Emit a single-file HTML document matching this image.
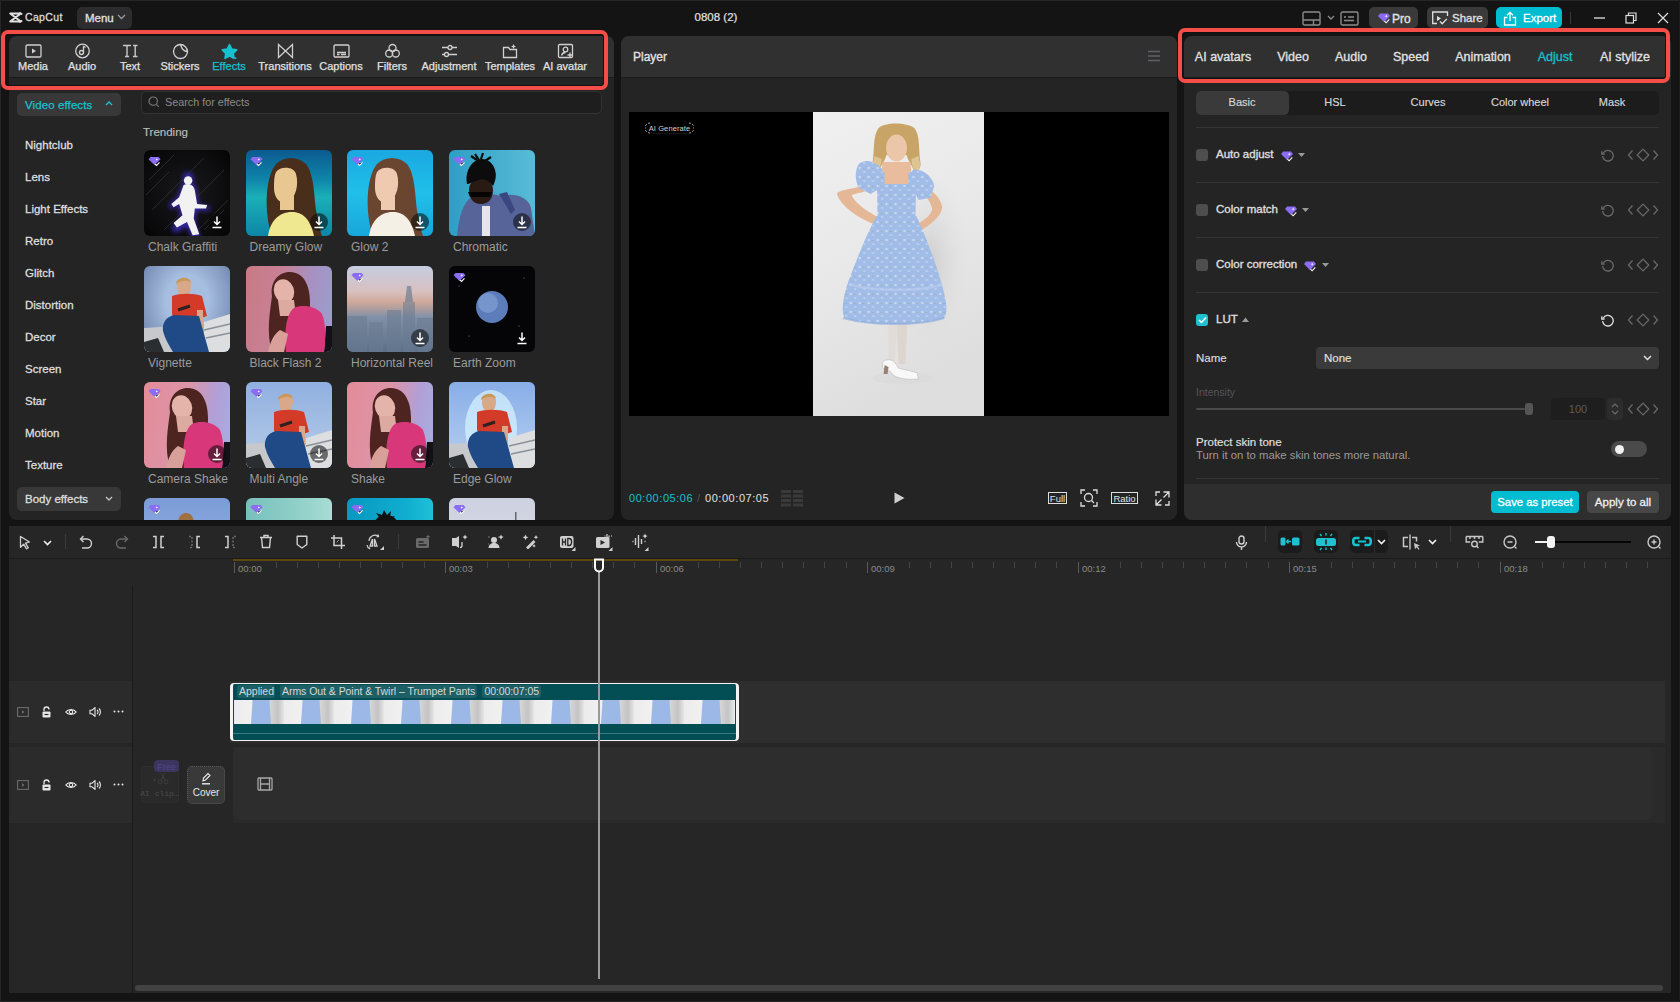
<!DOCTYPE html>
<html><head><meta charset="utf-8"><style>
html,body{margin:0;padding:0;}
body{width:1680px;height:1002px;overflow:hidden;background:#141414;font-family:"Liberation Sans", sans-serif;position:relative;}
.a{position:absolute;}
.t{white-space:nowrap;}
</style></head><body>
<div class="a" style="left:0px;top:0px;width:1680px;height:1px;background:#262626;border-radius:0px;"></div><div class="a" style="left:0px;top:0px;width:1px;height:1002px;background:#262626;border-radius:0px;"></div><div class="a" style="left:0px;top:1001px;width:1680px;height:1px;background:#262626;border-radius:0px;"></div><div class="a" style="left:1679px;top:0px;width:1px;height:1002px;background:#1c1c1c;border-radius:0px;"></div><svg class="a" style="left:9px;top:11.5px;" width="14" height="11" viewBox="0 0 14 11" fill="none"><path d="M1.2 1.5h10M1.2 9.5h10M1.5 1.8l10 7.5M11.5 1.8l-10 7.5M11 1l1.5 1M11 10l1.5-1" stroke="#e0e0e0" stroke-width="2" stroke-linecap="round"/></svg><div class="a t" style="font-size:10.5px;line-height:10.5px;color:#dcdcdc;font-weight:400;top:12.21px;letter-spacing:0.35px;-webkit-text-stroke:0.3px #dcdcdc;left:25px;">CapCut</div><div class="a" style="left:77px;top:7px;width:55px;height:22px;background:#2c2c2f;border-radius:5px;"></div><div class="a t" style="font-size:11.5px;line-height:11.5px;color:#e2e2e2;font-weight:400;top:12.57px;-webkit-text-stroke:0.3px #e2e2e2;left:85px;">Menu</div><svg class="a" style="left:117px;top:14px;" width="9" height="6" viewBox="0 0 9 6" fill="none"><path d="M1 1l3.5 3.5L8 1" stroke="#9a9a9a" stroke-width="1.3"/></svg><div class="a t" style="font-size:11.5px;line-height:11.5px;color:#e2e2e2;font-weight:400;top:12.07px;-webkit-text-stroke:0.2px #e2e2e2;left:516px;width:400px;text-align:center;">0808 (2)</div><svg class="a" style="left:1302px;top:11px;" width="19" height="15" viewBox="0 0 19 15" fill="none"><rect x="1" y="1" width="17" height="13" rx="1.5" stroke="#8a8a8a" stroke-width="1.4"/><path d="M1 9h17M11.5 9v5" stroke="#8a8a8a" stroke-width="1.4"/></svg><svg class="a" style="left:1327px;top:15px;" width="8" height="5" viewBox="0 0 8 5" fill="none"><path d="M1 1l3 3 3-3" stroke="#8a8a8a" stroke-width="1.3"/></svg><svg class="a" style="left:1340px;top:11px;" width="19" height="15" viewBox="0 0 19 15" fill="none"><rect x="1" y="1" width="17" height="13" rx="1.5" stroke="#8a8a8a" stroke-width="1.4"/><path d="M4 6h2M8 6h6M4 9.5h10" stroke="#8a8a8a" stroke-width="1.4"/></svg><div class="a" style="left:1369px;top:7px;width:49px;height:21px;background:#3a3a3a;border-radius:5px;"></div><svg class="a" style="left:1378px;top:12px;" width="13" height="12" viewBox="0 0 13 12" fill="none"><path d="M2 1.5h8l2 2.5-6 6-6-6z" fill="#8b6cf5"/><path d="M6.5 9.2l1.6 1.6 3.2-3.4" stroke="#fff" stroke-width="1.1"/><path d="M8.2 2.8l.5 1 1 .4-1 .4-.5 1-.5-1-1-.4 1-.4z" fill="#fff"/></svg><div class="a t" style="font-size:12px;line-height:12px;color:#e2e2e2;font-weight:400;top:12.64px;-webkit-text-stroke:0.35px #e2e2e2;left:1392px;">Pro</div><div class="a" style="left:1427px;top:7px;width:61px;height:21px;background:#3a3a3a;border-radius:5px;"></div><svg class="a" style="left:1431px;top:11px;" width="18" height="15" viewBox="0 0 18 15" fill="none"><path d="M13 1H1.7v11.5H6M16.5 5v-4H13" stroke="#e0e0e0" stroke-width="1.3"/><path d="M6 5l4 2.5L6 10z" fill="#e0e0e0"/><path d="M9 10.5l2.2 2.2 4.6-4.8" stroke="#e0e0e0" stroke-width="1.3"/></svg><div class="a t" style="font-size:11.5px;line-height:11.5px;color:#e2e2e2;font-weight:400;top:12.57px;-webkit-text-stroke:0.3px #e2e2e2;left:1452px;">Share</div><div class="a" style="left:1496px;top:7px;width:66px;height:21px;background:#00bcd0;border-radius:5px;"></div><svg class="a" style="left:1503px;top:11px;" width="14" height="15" viewBox="0 0 14 15" fill="none"><path d="M4.5 6.5H1.5v7.5h11V6.5h-3" stroke="#fff" stroke-width="1.3"/><path d="M7 10V1.5M4 4.3L7 1.3l3 3" stroke="#fff" stroke-width="1.3"/></svg><div class="a t" style="font-size:11.5px;line-height:11.5px;color:#ffffff;font-weight:400;top:12.57px;-webkit-text-stroke:0.3px #ffffff;left:1523px;">Export</div><div class="a" style="left:1570px;top:12px;width:1px;height:12px;background:#3a3a3a;border-radius:0px;"></div><div class="a" style="left:1594px;top:17px;width:11px;height:1.6px;background:#9a9a9a;border-radius:0px;"></div><svg class="a" style="left:1625px;top:12px;" width="12" height="12" viewBox="0 0 12 12" fill="none"><rect x="1" y="3.5" width="7.5" height="7.5" stroke="#e0e0e0" stroke-width="1.2"/><path d="M3.5 3.5V1h7.5v7.5H8.5" stroke="#e0e0e0" stroke-width="1.2"/></svg><svg class="a" style="left:1657px;top:12px;" width="12" height="12" viewBox="0 0 12 12" fill="none"><path d="M1 1l10 10M11 1L1 11" stroke="#e0e0e0" stroke-width="1.2"/></svg><div class="a" style="left:9px;top:36px;width:605px;height:484px;background:#242424;border-radius:8px;overflow:hidden;"></div><div class="a" style="left:9px;top:36px;width:605px;height:41px;background:#303030;border-radius:0px;border-radius:8px 8px 0 0;"></div><div class="a" style="left:9px;top:77px;width:605px;height:1px;background:#1b1b1b;border-radius:0px;"></div><div class="a" style="left:621px;top:36px;width:556px;height:484px;background:#242424;border-radius:8px;overflow:hidden;"></div><div class="a" style="left:621px;top:36px;width:556px;height:41px;background:#303030;border-radius:0px;border-radius:8px 8px 0 0;"></div><div class="a" style="left:621px;top:77px;width:556px;height:1px;background:#1b1b1b;border-radius:0px;"></div><div class="a" style="left:1184px;top:36px;width:487px;height:484px;background:#242424;border-radius:8px;overflow:hidden;"></div><div class="a" style="left:1184px;top:36px;width:487px;height:41px;background:#303030;border-radius:0px;border-radius:8px 8px 0 0;"></div><div class="a" style="left:1184px;top:77px;width:487px;height:1px;background:#1b1b1b;border-radius:0px;"></div><svg class="a" style="left:24.5px;top:43px;" width="17" height="17" viewBox="0 0 17 17" fill="none"><rect x="1" y="2" width="15" height="12" rx="1.2" stroke="#d0d0d0" stroke-width="1.3"/><path d="M7 5.5l4 2.5-4 2.5z" fill="#d0d0d0"/></svg><div class="a t" style="font-size:11px;line-height:11px;color:#e0e0e0;font-weight:400;top:61.49px;-webkit-text-stroke:0.25px #e0e0e0;left:-167px;width:400px;text-align:center;">Media</div><svg class="a" style="left:73.5px;top:43px;" width="17" height="17" viewBox="0 0 17 17" fill="none"><circle cx="8.5" cy="8" r="6.8" stroke="#d0d0d0" stroke-width="1.3"/><circle cx="7.5" cy="9.5" r="2" stroke="#d0d0d0" stroke-width="1.3"/><path d="M9.5 9.5V3.5l2 .8" stroke="#d0d0d0" stroke-width="1.3"/></svg><div class="a t" style="font-size:11px;line-height:11px;color:#e0e0e0;font-weight:400;top:61.49px;-webkit-text-stroke:0.25px #e0e0e0;left:-118px;width:400px;text-align:center;">Audio</div><svg class="a" style="left:121.5px;top:43px;" width="17" height="17" viewBox="0 0 17 17" fill="none"><path d="M1 2.5h8M5 2.5v11M3 13.5h4M11 2.5h4.5M13.2 2.5v11M11 13.5h4.5" stroke="#c8c8c8" stroke-width="1.4"/></svg><div class="a t" style="font-size:11px;line-height:11px;color:#e0e0e0;font-weight:400;top:61.49px;-webkit-text-stroke:0.25px #e0e0e0;left:-70px;width:400px;text-align:center;">Text</div><svg class="a" style="left:171.5px;top:43px;" width="17" height="17" viewBox="0 0 17 17" fill="none"><path d="M15.5 8.5A7 7 0 1 1 8.5 1.5" stroke="#d0d0d0" stroke-width="1.3"/><path d="M8.5 1.5c3.5 0 7 3.5 7 7-3 0-5.5-1-7-7z" stroke="#d0d0d0" stroke-width="1.3"/></svg><div class="a t" style="font-size:11px;line-height:11px;color:#e0e0e0;font-weight:400;top:61.49px;-webkit-text-stroke:0.25px #e0e0e0;left:-20px;width:400px;text-align:center;">Stickers</div><svg class="a" style="left:220.5px;top:43px;" width="17" height="17" viewBox="0 0 17 17" fill="none"><path d="M8.50 1.60 L10.79 6.04 L15.73 6.85 L12.21 10.41 L12.97 15.35 L8.50 13.10 L4.03 15.35 L4.79 10.41 L1.27 6.85 L6.21 6.04z" fill="#14c2d0" stroke="#14c2d0" stroke-width="1.6" stroke-linejoin="round"/><path d="M13.5 14.2l1.8 1.6" stroke="#14c2d0" stroke-width="1.2"/></svg><div class="a t" style="font-size:11px;line-height:11px;color:#14c2d0;font-weight:400;top:61.49px;-webkit-text-stroke:0.25px #14c2d0;left:29px;width:400px;text-align:center;">Effects</div><svg class="a" style="left:276.5px;top:43px;" width="17" height="17" viewBox="0 0 17 17" fill="none"><path d="M1.5 1.5v13L8.5 8zM15.5 1.5v13L8.5 8z" stroke="#d0d0d0" stroke-width="1.3"/></svg><div class="a t" style="font-size:11px;line-height:11px;color:#e0e0e0;font-weight:400;top:61.49px;-webkit-text-stroke:0.25px #e0e0e0;left:85px;width:400px;text-align:center;">Transitions</div><svg class="a" style="left:332.5px;top:43px;" width="17" height="17" viewBox="0 0 17 17" fill="none"><rect x="1" y="2" width="15" height="12" rx="1.2" stroke="#d0d0d0" stroke-width="1.3"/><path d="M4 9.5h9M4 11.5h2.5M8 11.5h5" stroke="#d0d0d0" stroke-width="1.3"/></svg><div class="a t" style="font-size:11px;line-height:11px;color:#e0e0e0;font-weight:400;top:61.49px;-webkit-text-stroke:0.25px #e0e0e0;left:141px;width:400px;text-align:center;">Captions</div><svg class="a" style="left:383.5px;top:43px;" width="17" height="17" viewBox="0 0 17 17" fill="none"><circle cx="8.5" cy="5" r="3.5" stroke="#d0d0d0" stroke-width="1.3"/><circle cx="5.2" cy="10.5" r="3.5" stroke="#d0d0d0" stroke-width="1.3"/><circle cx="11.8" cy="10.5" r="3.5" stroke="#d0d0d0" stroke-width="1.3"/></svg><div class="a t" style="font-size:11px;line-height:11px;color:#e0e0e0;font-weight:400;top:61.49px;-webkit-text-stroke:0.25px #e0e0e0;left:192px;width:400px;text-align:center;">Filters</div><svg class="a" style="left:440.5px;top:43px;" width="17" height="17" viewBox="0 0 17 17" fill="none"><path d="M1 4.5h6M11 4.5h5M1 11.5h2.5M7.5 11.5h8.5" stroke="#d0d0d0" stroke-width="1.3"/><circle cx="9" cy="4.5" r="2" stroke="#d0d0d0" stroke-width="1.3"/><circle cx="5.5" cy="11.5" r="2" stroke="#d0d0d0" stroke-width="1.3"/></svg><div class="a t" style="font-size:11px;line-height:11px;color:#e0e0e0;font-weight:400;top:61.49px;-webkit-text-stroke:0.25px #e0e0e0;left:249px;width:400px;text-align:center;">Adjustment</div><svg class="a" style="left:501.5px;top:43px;" width="17" height="17" viewBox="0 0 17 17" fill="none"><path d="M1.5 4.5h5l1.5 2h6.5v8h-13z" stroke="#d0d0d0" stroke-width="1.3"/><path d="M11.5 1l.8 1.7 1.7.8-1.7.8-.8 1.7-.8-1.7-1.7-.8 1.7-.8z" fill="#d0d0d0"/></svg><div class="a t" style="font-size:11px;line-height:11px;color:#e0e0e0;font-weight:400;top:61.49px;-webkit-text-stroke:0.25px #e0e0e0;left:310px;width:400px;text-align:center;">Templates</div><svg class="a" style="left:556.5px;top:43px;" width="17" height="17" viewBox="0 0 17 17" fill="none"><rect x="1.5" y="1.5" width="14" height="13" rx="1.2" stroke="#d0d0d0" stroke-width="1.3"/><circle cx="8.5" cy="6.5" r="2.3" stroke="#d0d0d0" stroke-width="1.3"/><path d="M4.5 12.5c.5-2 2-3 4-3" stroke="#d0d0d0" stroke-width="1.3"/><path d="M13 9.5v5M10.5 12h5" stroke="#d0d0d0" stroke-width="1.3"/></svg><div class="a t" style="font-size:11px;line-height:11px;color:#e0e0e0;font-weight:400;top:61.49px;-webkit-text-stroke:0.25px #e0e0e0;left:365px;width:400px;text-align:center;">AI avatar</div><div class="a" style="left:17px;top:93px;width:104px;height:23px;background:#383838;border-radius:5px;"></div><div class="a t" style="font-size:11.5px;line-height:11.5px;color:#14c2d0;font-weight:400;top:99.57px;letter-spacing:0.1px;-webkit-text-stroke:0.25px #14c2d0;left:25px;">Video effects</div><svg class="a" style="left:105px;top:101px;" width="8" height="5" viewBox="0 0 8 5" fill="none"><path d="M1 4l3-3 3 3" stroke="#1fc0cf" stroke-width="1.4"/></svg><div class="a t" style="font-size:11.5px;line-height:11.5px;color:#dedede;font-weight:400;top:139.77px;-webkit-text-stroke:0.3px #dedede;left:25px;">Nightclub</div><div class="a t" style="font-size:11.5px;line-height:11.5px;color:#dedede;font-weight:400;top:171.77px;-webkit-text-stroke:0.3px #dedede;left:25px;">Lens</div><div class="a t" style="font-size:11.5px;line-height:11.5px;color:#dedede;font-weight:400;top:203.77px;-webkit-text-stroke:0.3px #dedede;left:25px;">Light Effects</div><div class="a t" style="font-size:11.5px;line-height:11.5px;color:#dedede;font-weight:400;top:235.77px;-webkit-text-stroke:0.3px #dedede;left:25px;">Retro</div><div class="a t" style="font-size:11.5px;line-height:11.5px;color:#dedede;font-weight:400;top:267.77px;-webkit-text-stroke:0.3px #dedede;left:25px;">Glitch</div><div class="a t" style="font-size:11.5px;line-height:11.5px;color:#dedede;font-weight:400;top:299.77px;-webkit-text-stroke:0.3px #dedede;left:25px;">Distortion</div><div class="a t" style="font-size:11.5px;line-height:11.5px;color:#dedede;font-weight:400;top:331.77px;-webkit-text-stroke:0.3px #dedede;left:25px;">Decor</div><div class="a t" style="font-size:11.5px;line-height:11.5px;color:#dedede;font-weight:400;top:363.77px;-webkit-text-stroke:0.3px #dedede;left:25px;">Screen</div><div class="a t" style="font-size:11.5px;line-height:11.5px;color:#dedede;font-weight:400;top:395.77px;-webkit-text-stroke:0.3px #dedede;left:25px;">Star</div><div class="a t" style="font-size:11.5px;line-height:11.5px;color:#dedede;font-weight:400;top:427.77px;-webkit-text-stroke:0.3px #dedede;left:25px;">Motion</div><div class="a t" style="font-size:11.5px;line-height:11.5px;color:#dedede;font-weight:400;top:459.77px;-webkit-text-stroke:0.3px #dedede;left:25px;">Texture</div><div class="a" style="left:17px;top:487px;width:104px;height:24px;background:#383838;border-radius:5px;"></div><div class="a t" style="font-size:11.5px;line-height:11.5px;color:#dedede;font-weight:400;top:493.57px;-webkit-text-stroke:0.3px #dedede;left:25px;">Body effects</div><svg class="a" style="left:105px;top:496px;" width="8" height="5" viewBox="0 0 8 5" fill="none"><path d="M1 1l3 3 3-3" stroke="#c0c0c0" stroke-width="1.4"/></svg><div class="a" style="left:141px;top:91px;width:461px;height:23px;background:#1e1e1e;border-radius:5px;box-sizing:border-box;border:1px solid #333;"></div><svg class="a" style="left:148px;top:96px;" width="12" height="12" viewBox="0 0 12 12" fill="none"><circle cx="5.2" cy="5.2" r="4.2" stroke="#777" stroke-width="1.2"/><path d="M8.3 8.3l2.5 2.5" stroke="#777" stroke-width="1.2"/></svg><div class="a t" style="font-size:10.8px;line-height:10.8px;color:#8a8a8a;font-weight:400;top:97.26px;left:165px;">Search for effects</div><div class="a t" style="font-size:11.5px;line-height:11.5px;color:#bdbdbd;font-weight:400;top:127.07px;-webkit-text-stroke:0.15px #bdbdbd;left:143px;">Trending</div><div class="a" style="left:9px;top:36px;width:605px;height:484px;overflow:hidden;border-radius:8px;pointer-events:none;"><div class="a" style="left:135px;top:114px;width:86px;height:86px;border-radius:6px;overflow:hidden;background:radial-gradient(ellipse at 50% 50%,#1a1a1e,#050505);"><svg width="86" height="86" viewBox="0 0 86 86"><defs><filter id="bl" x="-50%" y="-50%" width="200%" height="200%"><feGaussianBlur stdDeviation="2.2"/></filter></defs><g stroke="#3a3a3a" stroke-width="0.8" opacity="0.8"><path d="M5 30L30 5M8 60L60 8M20 80L80 20M50 84L84 50M2 45L25 22M60 80L80 60"/></g><g transform="translate(43 54) scale(1.12) translate(-46 -58)"><g filter="url(#bl)" fill="#3a2ab8" opacity="0.95" transform="translate(46 52) scale(1.18) translate(-46 -52)"><circle cx="47" cy="37" r="4"/><path d="M43 41c5-2 9 0 10 5l2 12 9 1-1 3-10 0-1 9 5 14-6 1-5-12-9 5-3-4 8-7-3-10-5 3-2-3 7-6z"/></g><circle cx="47" cy="37" r="3.8" fill="#f2f2f2"/><path d="M43 41c5-2 9 0 10 5l2 12 9 1-1 3-10 0-1 9 5 14-6 1-5-12-9 5-3-4 8-7-3-10-5 3-2-3 7-6z" fill="#f2f2f2"/></g><g transform="translate(5,6)"><path d="M1.5 1h8l2 2.3-6 5.7-6-5.7z" fill="#8b6cf5"/><path d="M6 8l1.5 1.5 3-3.2" stroke="#fff" stroke-width="1.1"/><path d="M7.8 2.2l.45.9.9.35-.9.35-.45.9-.45-.9-.9-.35.9-.35z" fill="#fff"/></g><circle cx="73" cy="72" r="9" fill="rgba(10,10,10,0.55)"/><path d="M73 66.5v8M70 71.5l3 3 3-3M68.5 77.5h9" stroke="#fff" stroke-width="1.5"/></svg></div><div class="a t" style="left:139px;top:205.04px;font-size:12px;line-height:12px;color:#9c9c9c;">Chalk Graffiti</div><div class="a" style="left:236.5px;top:114px;width:86px;height:86px;border-radius:6px;overflow:hidden;background:linear-gradient(180deg,#0b5a90 0%,#0f86aa 35%,#1ab0b8 55%,#0d86a6 100%);"><svg width="86" height="86" viewBox="0 0 86 86"><path d="M24 80C18 56 20 26 30 14c8-8 22-8 30 0 8 10 8 30 10 46 2 12 4 20 6 26H40z" fill="#4a2e1c"/><path d="M30 22c4-6 18-6 20 2 3 10 0 24-8 28-8 3-14-4-14-14 0-6 0-12 2-16z" fill="#e8c890"/><path d="M34 46h14v14H34z" fill="#e8c890"/><path d="M22 86c2-14 10-24 24-24 10 0 18 6 22 24z" fill="#f0e890"/><g transform="translate(5,6)"><path d="M1.5 1h8l2 2.3-6 5.7-6-5.7z" fill="#8b6cf5"/><path d="M6 8l1.5 1.5 3-3.2" stroke="#fff" stroke-width="1.1"/><path d="M7.8 2.2l.45.9.9.35-.9.35-.45.9-.45-.9-.9-.35.9-.35z" fill="#fff"/></g><circle cx="73" cy="72" r="9" fill="rgba(10,10,10,0.55)"/><path d="M73 66.5v8M70 71.5l3 3 3-3M68.5 77.5h9" stroke="#fff" stroke-width="1.5"/></svg></div><div class="a t" style="left:240.5px;top:205.04px;font-size:12px;line-height:12px;color:#9c9c9c;">Dreamy Glow</div><div class="a" style="left:338px;top:114px;width:86px;height:86px;border-radius:6px;overflow:hidden;background:linear-gradient(180deg,#1aa8e0 0%,#20c0ea 50%,#18a6da 100%);"><svg width="86" height="86" viewBox="0 0 86 86"><path d="M24 80C18 56 20 26 30 14c8-8 22-8 30 0 8 10 8 30 10 46 2 12 4 20 6 26H40z" fill="#6a4630"/><path d="M30 22c4-6 18-6 20 2 3 10 0 24-8 28-8 3-14-4-14-14 0-6 0-12 2-16z" fill="#f0cab0"/><path d="M34 46h14v14H34z" fill="#f0cab0"/><path d="M22 86c2-14 10-24 24-24 10 0 18 6 22 24z" fill="#f4f0e6"/><g transform="translate(5,6)"><path d="M1.5 1h8l2 2.3-6 5.7-6-5.7z" fill="#8b6cf5"/><path d="M6 8l1.5 1.5 3-3.2" stroke="#fff" stroke-width="1.1"/><path d="M7.8 2.2l.45.9.9.35-.9.35-.45.9-.45-.9-.9-.35.9-.35z" fill="#fff"/></g><circle cx="73" cy="72" r="9" fill="rgba(10,10,10,0.55)"/><path d="M73 66.5v8M70 71.5l3 3 3-3M68.5 77.5h9" stroke="#fff" stroke-width="1.5"/></svg></div><div class="a t" style="left:342px;top:205.04px;font-size:12px;line-height:12px;color:#9c9c9c;">Glow 2</div><div class="a" style="left:440px;top:114px;width:86px;height:86px;border-radius:6px;overflow:hidden;background:linear-gradient(90deg,#2e9ec4,#48b0d0 60%,#58bcd8);"><svg width="86" height="86" viewBox="0 0 86 86"><path d="M8 86c2-20 6-34 16-40 10-4 20-2 30 0 12-4 26 2 28 12l4 28z" fill="#56649a"/><path d="M50 44l12 20 4-4-8-18z" fill="#3a4680"/><path d="M33 56h8v30h-8z" fill="#e6e6ea"/><path d="M20 40c0-8 6-12 12-12s12 4 12 12c0 8-4 14-12 14s-12-6-12-14z" fill="#2a1a14"/><path d="M19 42h24l-2 5H21z" fill="#050505"/><path d="M18 34c-2-10 2-20 10-24 8-3 16 2 18 10 2 6 0 12-2 16-4-6-10-8-14-6-6 2-10 4-12 4z" fill="#0c0c0c"/><path d="M28 10l-6-4M32 9l2-6M36 11l6-4M30 10l-4-6" stroke="#0c0c0c" stroke-width="2.2"/><g transform="translate(5,6)"><path d="M1.5 1h8l2 2.3-6 5.7-6-5.7z" fill="#8b6cf5"/><path d="M6 8l1.5 1.5 3-3.2" stroke="#fff" stroke-width="1.1"/><path d="M7.8 2.2l.45.9.9.35-.9.35-.45.9-.45-.9-.9-.35.9-.35z" fill="#fff"/></g><circle cx="73" cy="72" r="9" fill="rgba(10,10,10,0.55)"/><path d="M73 66.5v8M70 71.5l3 3 3-3M68.5 77.5h9" stroke="#fff" stroke-width="1.5"/></svg></div><div class="a t" style="left:444px;top:205.04px;font-size:12px;line-height:12px;color:#9c9c9c;">Chromatic</div><div class="a" style="left:135px;top:230px;width:86px;height:86px;border-radius:6px;overflow:hidden;background:radial-gradient(ellipse at 50% 40%,#a6bee0 35%,#6478a0 100%);"><svg width="86" height="86" viewBox="0 0 86 86"><path d="M0 62l32-2v26H0z" fill="#c6c8cc"/><path d="M0 76l14-4 6 14H0z" fill="#2a2e30"/><path d="M60 56l26-8v38H60z" fill="#dcdee0"/><path d="M60 64l26-6M62 72l24-5" stroke="#8a9098" stroke-width="1.5"/><path d="M33 20c0-6 4-8 7-8s7 2 7 8c0 6-3 10-7 10s-7-4-7-10z" fill="#d8a888"/><path d="M32 18c0-7 14-9 15-1-3-3-9-3-15 1z" fill="#c89858"/><path d="M28 30c8-3 22-3 30 0l5 20-6 2-2 6H32l-4-10z" fill="#d43a28"/><path d="M34 44l12-4" stroke="#302020" stroke-width="3"/><path d="M53 44h6v20h-6z" fill="#d8a888"/><path d="M30 49c-8 2-12 8-11 16 2 8 6 14 10 21h36l-10-36z" fill="#1f4a86"/></svg></div><div class="a t" style="left:139px;top:321.04px;font-size:12px;line-height:12px;color:#9c9c9c;">Vignette</div><div class="a" style="left:236.5px;top:230px;width:86px;height:86px;border-radius:6px;overflow:hidden;background:linear-gradient(100deg,#c87a84 0%,#c88094 35%,#a890c0 65%,#98a0d0 100%);"><svg width="86" height="86" viewBox="0 0 86 86"><path d="M80 60h6v26h-8z" fill="#141018"/><path d="M26 86c-6-20-2-40 0-56-2-14 6-24 18-24 14 0 20 14 20 30 0 16-2 30 2 50z" fill="#4e2420"/><ellipse cx="38" cy="25" rx="10" ry="12" fill="#e4b4aa" transform="rotate(-20 38 25)"/><path d="M32 34h16l2 16H34z" fill="#dcaaa0"/><path d="M40 86c-2-20 0-38 8-44 8-4 22-2 28 6 4 10 4 24 2 38z" fill="#d8387a"/><path d="M22 86c2-10 6-18 12-22l8 4-4 18z" fill="#d8a098"/></svg></div><div class="a t" style="left:240.5px;top:321.04px;font-size:12px;line-height:12px;color:#9c9c9c;">Black Flash 2</div><div class="a" style="left:338px;top:230px;width:86px;height:86px;border-radius:6px;overflow:hidden;background:linear-gradient(180deg,#c6cde0 0%,#d8c0c0 30%,#d0a898 42%,#8090a8 60%,#5a7088 100%);"><svg width="86" height="86" viewBox="0 0 86 86"><path d="M60 20h4l2 16h-8z" fill="#7a8498" opacity="0.8"/><path d="M0 50h20v36H0zM22 56h14v30H22zM40 44h14v42H40zM56 36h12v50H56zM70 52h16v34H70z" fill="#6a7a90" opacity="0.55"/><g transform="translate(5,6)"><path d="M1.5 1h8l2 2.3-6 5.7-6-5.7z" fill="#8b6cf5"/><path d="M6 8l1.5 1.5 3-3.2" stroke="#fff" stroke-width="1.1"/><path d="M7.8 2.2l.45.9.9.35-.9.35-.45.9-.45-.9-.9-.35.9-.35z" fill="#fff"/></g><circle cx="73" cy="72" r="9" fill="rgba(10,10,10,0.55)"/><path d="M73 66.5v8M70 71.5l3 3 3-3M68.5 77.5h9" stroke="#fff" stroke-width="1.5"/></svg></div><div class="a t" style="left:342px;top:321.04px;font-size:12px;line-height:12px;color:#9c9c9c;">Horizontal Reel</div><div class="a" style="left:440px;top:230px;width:86px;height:86px;border-radius:6px;overflow:hidden;background:#050508;"><svg width="86" height="86" viewBox="0 0 86 86"><circle cx="43" cy="41" r="16" fill="#5c7cba"/><circle cx="39" cy="37" r="10" fill="#8eaadc" opacity="0.55"/><g fill="#fff" opacity="0.5"><circle cx="10" cy="20" r="0.6"/><circle cx="75" cy="12" r="0.6"/><circle cx="70" cy="60" r="0.6"/><circle cx="20" cy="70" r="0.6"/></g><g transform="translate(5,6)"><path d="M1.5 1h8l2 2.3-6 5.7-6-5.7z" fill="#8b6cf5"/><path d="M6 8l1.5 1.5 3-3.2" stroke="#fff" stroke-width="1.1"/><path d="M7.8 2.2l.45.9.9.35-.9.35-.45.9-.45-.9-.9-.35.9-.35z" fill="#fff"/></g><path d="M73 66.5v8M70 71.5l3 3 3-3M68.5 77.5h9" stroke="#fff" stroke-width="1.5"/></svg></div><div class="a t" style="left:444px;top:321.04px;font-size:12px;line-height:12px;color:#9c9c9c;">Earth Zoom</div><div class="a" style="left:135px;top:346px;width:86px;height:86px;border-radius:6px;overflow:hidden;background:linear-gradient(100deg,#e48c98 0%,#dc94a8 45%,#b0a0d8 75%,#a8b0e0 100%);"><svg width="86" height="86" viewBox="0 0 86 86"><path d="M80 60h6v26h-8z" fill="#141018"/><path d="M26 86c-6-20-2-40 0-56-2-14 6-24 18-24 14 0 20 14 20 30 0 16-2 30 2 50z" fill="#4e2420"/><ellipse cx="38" cy="25" rx="10" ry="12" fill="#e4b4aa" transform="rotate(-20 38 25)"/><path d="M32 34h16l2 16H34z" fill="#dcaaa0"/><path d="M40 86c-2-20 0-38 8-44 8-4 22-2 28 6 4 10 4 24 2 38z" fill="#d8387a"/><path d="M22 86c2-10 6-18 12-22l8 4-4 18z" fill="#d8a098"/><g transform="translate(5,6)"><path d="M1.5 1h8l2 2.3-6 5.7-6-5.7z" fill="#8b6cf5"/><path d="M6 8l1.5 1.5 3-3.2" stroke="#fff" stroke-width="1.1"/><path d="M7.8 2.2l.45.9.9.35-.9.35-.45.9-.45-.9-.9-.35.9-.35z" fill="#fff"/></g><circle cx="73" cy="72" r="9" fill="rgba(10,10,10,0.55)"/><path d="M73 66.5v8M70 71.5l3 3 3-3M68.5 77.5h9" stroke="#fff" stroke-width="1.5"/></svg></div><div class="a t" style="left:139px;top:437.04px;font-size:12px;line-height:12px;color:#9c9c9c;">Camera Shake</div><div class="a" style="left:236.5px;top:346px;width:86px;height:86px;border-radius:6px;overflow:hidden;background:linear-gradient(180deg,#90b0e0,#b8cce8);"><svg width="86" height="86" viewBox="0 0 86 86"><path d="M0 62l32-2v26H0z" fill="#c6c8cc"/><path d="M0 76l14-4 6 14H0z" fill="#2a2e30"/><path d="M60 56l26-8v38H60z" fill="#dcdee0"/><path d="M60 64l26-6M62 72l24-5" stroke="#8a9098" stroke-width="1.5"/><path d="M33 20c0-6 4-8 7-8s7 2 7 8c0 6-3 10-7 10s-7-4-7-10z" fill="#d8a888"/><path d="M32 18c0-7 14-9 15-1-3-3-9-3-15 1z" fill="#c89858"/><path d="M28 30c8-3 22-3 30 0l5 20-6 2-2 6H32l-4-10z" fill="#d43a28"/><path d="M34 44l12-4" stroke="#302020" stroke-width="3"/><path d="M53 44h6v20h-6z" fill="#d8a888"/><path d="M30 49c-8 2-12 8-11 16 2 8 6 14 10 21h36l-10-36z" fill="#1f4a86"/><g transform="translate(5,6)"><path d="M1.5 1h8l2 2.3-6 5.7-6-5.7z" fill="#8b6cf5"/><path d="M6 8l1.5 1.5 3-3.2" stroke="#fff" stroke-width="1.1"/><path d="M7.8 2.2l.45.9.9.35-.9.35-.45.9-.45-.9-.9-.35.9-.35z" fill="#fff"/></g><circle cx="73" cy="72" r="9" fill="rgba(10,10,10,0.55)"/><path d="M73 66.5v8M70 71.5l3 3 3-3M68.5 77.5h9" stroke="#fff" stroke-width="1.5"/></svg></div><div class="a t" style="left:240.5px;top:437.04px;font-size:12px;line-height:12px;color:#9c9c9c;">Multi Angle</div><div class="a" style="left:338px;top:346px;width:86px;height:86px;border-radius:6px;overflow:hidden;background:linear-gradient(100deg,#e48c98 0%,#dc94a8 45%,#b0a0d8 75%,#a8b0e0 100%);"><svg width="86" height="86" viewBox="0 0 86 86"><path d="M80 60h6v26h-8z" fill="#141018"/><path d="M26 86c-6-20-2-40 0-56-2-14 6-24 18-24 14 0 20 14 20 30 0 16-2 30 2 50z" fill="#4e2420"/><ellipse cx="38" cy="25" rx="10" ry="12" fill="#e4b4aa" transform="rotate(-20 38 25)"/><path d="M32 34h16l2 16H34z" fill="#dcaaa0"/><path d="M40 86c-2-20 0-38 8-44 8-4 22-2 28 6 4 10 4 24 2 38z" fill="#d8387a"/><path d="M22 86c2-10 6-18 12-22l8 4-4 18z" fill="#d8a098"/><circle cx="73" cy="72" r="9" fill="rgba(10,10,10,0.55)"/><path d="M73 66.5v8M70 71.5l3 3 3-3M68.5 77.5h9" stroke="#fff" stroke-width="1.5"/></svg></div><div class="a t" style="left:342px;top:437.04px;font-size:12px;line-height:12px;color:#9c9c9c;">Shake</div><div class="a" style="left:440px;top:346px;width:86px;height:86px;border-radius:6px;overflow:hidden;background:linear-gradient(180deg,#88aee8,#b8d0f0);"><svg width="86" height="86" viewBox="0 0 86 86"><ellipse cx="42" cy="46" rx="26" ry="38" fill="rgba(215,245,255,0.7)"/><path d="M0 62l32-2v26H0z" fill="#c6c8cc"/><path d="M0 76l14-4 6 14H0z" fill="#2a2e30"/><path d="M60 56l26-8v38H60z" fill="#dcdee0"/><path d="M60 64l26-6M62 72l24-5" stroke="#8a9098" stroke-width="1.5"/><path d="M33 20c0-6 4-8 7-8s7 2 7 8c0 6-3 10-7 10s-7-4-7-10z" fill="#d8a888"/><path d="M32 18c0-7 14-9 15-1-3-3-9-3-15 1z" fill="#c89858"/><path d="M28 30c8-3 22-3 30 0l5 20-6 2-2 6H32l-4-10z" fill="#d43a28"/><path d="M34 44l12-4" stroke="#302020" stroke-width="3"/><path d="M53 44h6v20h-6z" fill="#d8a888"/><path d="M30 49c-8 2-12 8-11 16 2 8 6 14 10 21h36l-10-36z" fill="#1f4a86"/></svg></div><div class="a t" style="left:444px;top:437.04px;font-size:12px;line-height:12px;color:#9c9c9c;">Edge Glow</div><div class="a" style="left:135px;top:462px;width:86px;height:86px;border-radius:6px;overflow:hidden;background:linear-gradient(180deg,#7c9cd8,#9cb8e6);"><svg width="86" height="86" viewBox="0 0 86 86"><path d="M34 26c0-8 4-11 8-11s8 3 8 11z" fill="#a07040"/><g transform="translate(5,6)"><path d="M1.5 1h8l2 2.3-6 5.7-6-5.7z" fill="#8b6cf5"/><path d="M6 8l1.5 1.5 3-3.2" stroke="#fff" stroke-width="1.1"/><path d="M7.8 2.2l.45.9.9.35-.9.35-.45.9-.45-.9-.9-.35.9-.35z" fill="#fff"/></g></svg></div><div class="a" style="left:236.5px;top:462px;width:86px;height:86px;border-radius:6px;overflow:hidden;background:linear-gradient(90deg,#78c0bc,#90d0c8 60%,#a8dcd4);"><svg width="86" height="86" viewBox="0 0 86 86"><g transform="translate(5,6)"><path d="M1.5 1h8l2 2.3-6 5.7-6-5.7z" fill="#8b6cf5"/><path d="M6 8l1.5 1.5 3-3.2" stroke="#fff" stroke-width="1.1"/><path d="M7.8 2.2l.45.9.9.35-.9.35-.45.9-.45-.9-.9-.35.9-.35z" fill="#fff"/></g></svg></div><div class="a" style="left:338px;top:462px;width:86px;height:86px;border-radius:6px;overflow:hidden;background:linear-gradient(90deg,#0898c0,#10aed0 70%,#20c0d8);"><svg width="86" height="86" viewBox="0 0 86 86"><path d="M26 30c0-8 6-13 13-13s13 5 13 13zM32 19l-3-4 6 2 2-5 3 5 4-4-1 6 5-1-4 4z" fill="#111"/><g transform="translate(5,6)"><path d="M1.5 1h8l2 2.3-6 5.7-6-5.7z" fill="#8b6cf5"/><path d="M6 8l1.5 1.5 3-3.2" stroke="#fff" stroke-width="1.1"/><path d="M7.8 2.2l.45.9.9.35-.9.35-.45.9-.45-.9-.9-.35.9-.35z" fill="#fff"/></g></svg></div><div class="a" style="left:440px;top:462px;width:86px;height:86px;border-radius:6px;overflow:hidden;background:linear-gradient(180deg,#cdd2e2,#dcd8dc);"><svg width="86" height="86" viewBox="0 0 86 86"><path d="M66 14h1.5v16H66z" fill="#666"/><g transform="translate(5,6)"><path d="M1.5 1h8l2 2.3-6 5.7-6-5.7z" fill="#8b6cf5"/><path d="M6 8l1.5 1.5 3-3.2" stroke="#fff" stroke-width="1.1"/><path d="M7.8 2.2l.45.9.9.35-.9.35-.45.9-.45-.9-.9-.35.9-.35z" fill="#fff"/></g></svg></div></div><div class="a t" style="font-size:12px;line-height:12px;color:#e4e4e4;font-weight:400;top:51.14px;-webkit-text-stroke:0.3px #e4e4e4;left:633px;">Player</div><svg class="a" style="left:1147px;top:50px;" width="14" height="12" viewBox="0 0 14 12" fill="none"><path d="M1 1.5h12M1 6h12M1 10.5h12" stroke="#5f5f66" stroke-width="1.3"/></svg><div class="a" style="left:629px;top:112px;width:540px;height:304px;background:#000;border-radius:0px;"></div><svg class="a" style="left:645px;top:122px;" width="49" height="12" viewBox="0 0 49 12" fill="none"><path d="M5 1A5 5 0 0 0 5 11M44 1A5 5 0 0 1 44 11" stroke="#bbb" stroke-width="0.9" stroke-dasharray="2 1.3"/><path d="M5 11.3h39" stroke="#222" stroke-width="0.8"/></svg><div class="a t" style="font-size:7.5px;line-height:7.5px;color:#d0d0d0;font-weight:400;top:124.95px;letter-spacing:0.1px;left:469.5px;width:400px;text-align:center;">AI Generate</div><svg class="a" style="left:813px;top:112px" width="171" height="304" viewBox="0 0 172 304" preserveAspectRatio="none">
<defs>
<linearGradient id="pbg" x1="0" y1="0" x2="0.3" y2="1"><stop offset="0" stop-color="#f0f0f0"/><stop offset="0.5" stop-color="#e9e9e9"/><stop offset="1" stop-color="#dedede"/></linearGradient>
<radialGradient id="shd" cx="0.5" cy="0.5" r="0.5"><stop offset="0" stop-color="#c8c8c8" stop-opacity="0.8"/><stop offset="1" stop-color="#e0e0e0" stop-opacity="0"/></radialGradient>
<pattern id="flo" width="9" height="9" patternUnits="userSpaceOnUse"><rect width="9" height="9" fill="#a2bce8"/><circle cx="2" cy="2" r="1.3" fill="#c8d8f0"/><circle cx="6.5" cy="6" r="1.1" fill="#c4d4ee"/><circle cx="6" cy="2.5" r="0.6" fill="#8aa890"/></pattern>
</defs>
<rect width="172" height="304" fill="url(#pbg)"/>
<ellipse cx="118" cy="150" rx="40" ry="90" fill="url(#shd)"/>
<ellipse cx="90" cy="266" rx="30" ry="6" fill="#d8d8d8" opacity="0.5"/>
<path d="M74 206h22l-2 26-4 22h-8l-6-22z" fill="#e6e1de"/>
<path d="M84 208h11l-2 44h-7z" fill="#dcd5d0"/>
<path d="M76 212h9l-3 38h-6z" fill="#e2dcd8"/>
<path d="M70 250c3-3 9-3 12 0l4 6c6 2 14 3 19 5l1 6c-8 1-18 0-24-3l-5-5-7-3z" fill="#f8f8f8" stroke="#c0c0c0" stroke-width="0.7"/>
<path d="M72 253l-1 9h4l1-7z" fill="#9a8070"/>
<path d="M50 74c-12 3-22 4-26 7 2 12 22 26 40 32l3-7c-12-6-26-16-28-23 6-2 12-3 14-4z" fill="#e4b896"/>
<path d="M118 78c6 4 12 12 12 18-2 10-14 18-24 24l-3-7c8-4 16-10 17-16-1-5-4-9-6-12z" fill="#e4b896"/>
<path d="M66 16c6-6 28-6 36 0 6 8 4 22 6 34 1 6-2 9-6 9-3-6-6-10-8-16H74c-2 6-5 10-8 16-4 0-7-3-6-9 2-12 0-26 6-34z" fill="#c8a466"/>
<path d="M62 44c-2 7-3 12 1 15 4-1 6-6 6-12zM106 44c2 7 3 12-1 15-4-1-6-6-6-12z" fill="#dec490"/>
<ellipse cx="84" cy="36" rx="10.5" ry="13.5" fill="#ecc6a8"/>
<path d="M70 50h28l2 22H68z" fill="#e8bc9c"/>
<path d="M46 52c8-6 18-2 24 6l-2 18-10 6-12-6c-4-8-4-18 0-24z" fill="url(#flo)"/>
<path d="M100 58c10-2 20 6 22 16l-4 12-12 2-8-18z" fill="url(#flo)"/>
<path d="M64 60h8v12h24V60h8l-1 46H65z" fill="url(#flo)"/>
<path d="M64 104h40c10 22 20 48 26 70 4 14 6 26 2 32-24 8-76 8-100 0-4-6-2-18 2-32 8-22 18-48 30-70z" fill="url(#flo)"/>
<path d="M36 172c26 8 74 8 94 0" stroke="#b8ccef" stroke-width="2.5" fill="none" opacity="0.7"/>
<path d="M30 206c30 8 76 8 102 0" stroke="#8aa8dc" stroke-width="2" fill="none" opacity="0.6"/>
</svg><div class="a t" style="font-size:11px;line-height:11px;color:#14c2d0;font-weight:400;top:493.19px;letter-spacing:0.55px;left:629px;">00:00:05:06</div><div class="a t" style="font-size:11px;line-height:11px;color:#555;font-weight:400;top:493.19px;left:697px;">/</div><div class="a t" style="font-size:11px;line-height:11px;color:#e0e0e0;font-weight:400;top:493.19px;letter-spacing:0.55px;left:705px;">00:00:07:05</div><svg class="a" style="left:781px;top:490px;" width="23" height="17" viewBox="0 0 23 17" fill="none"><g fill="#3a3a3a"><rect x="0" y="0" width="10" height="3"/><rect x="0" y="4.5" width="10" height="3"/><rect x="0" y="9" width="10" height="3"/><rect x="0" y="13.5" width="10" height="3"/><rect x="12" y="0" width="10" height="3"/><rect x="12" y="4.5" width="10" height="3"/><rect x="12" y="9" width="10" height="3"/><rect x="12" y="13.5" width="10" height="3"/></g></svg><svg class="a" style="left:894px;top:492px;" width="11" height="12" viewBox="0 0 11 12" fill="none"><path d="M0.5 0.5l10 5.5-10 5.5z" fill="#d0d0d0"/></svg><div class="a" style="left:1048px;top:492px;width:19px;height:12px;box-sizing:border-box;border:1.2px solid #ddd;"></div><div class="a t" style="font-size:9.5px;line-height:9.5px;color:#e0e0e0;font-weight:400;top:494.06px;left:857.5px;width:400px;text-align:center;">Full</div><svg class="a" style="left:1080px;top:489px;" width="18" height="18" viewBox="0 0 18 18" fill="none"><path d="M1 5V1h4M13 1h4v4M17 13v4h-4M5 17H1v-4" stroke="#ddd" stroke-width="1.3"/><circle cx="8.5" cy="8.5" r="4" stroke="#ddd" stroke-width="1.3"/><path d="M11.5 11.5l2.5 2.5" stroke="#ddd" stroke-width="1.3"/></svg><div class="a" style="left:1111px;top:492px;width:27px;height:12px;box-sizing:border-box;border:1.2px solid #ddd;"></div><div class="a t" style="font-size:9.5px;line-height:9.5px;color:#e0e0e0;font-weight:400;top:494.06px;left:924.5px;width:400px;text-align:center;">Ratio</div><svg class="a" style="left:1154.5px;top:490.5px;" width="15" height="15" viewBox="0 0 15 15" fill="none"><path d="M1 5V1h4M14 10v4h-4M8.5 1H14v5.5M14 1L8.5 6.5M1 8.5V14h5.5M1 14l5.5-5.5" stroke="#ddd" stroke-width="1.3"/></svg><div class="a t" style="font-size:12.5px;line-height:12.5px;color:#e2e2e2;font-weight:400;top:51.42px;-webkit-text-stroke:0.3px #e2e2e2;left:1023px;width:400px;text-align:center;">AI avatars</div><div class="a t" style="font-size:12.5px;line-height:12.5px;color:#e2e2e2;font-weight:400;top:51.42px;-webkit-text-stroke:0.3px #e2e2e2;left:1093px;width:400px;text-align:center;">Video</div><div class="a t" style="font-size:12.5px;line-height:12.5px;color:#e2e2e2;font-weight:400;top:51.42px;-webkit-text-stroke:0.3px #e2e2e2;left:1151px;width:400px;text-align:center;">Audio</div><div class="a t" style="font-size:12.5px;line-height:12.5px;color:#e2e2e2;font-weight:400;top:51.42px;-webkit-text-stroke:0.3px #e2e2e2;left:1211px;width:400px;text-align:center;">Speed</div><div class="a t" style="font-size:12.5px;line-height:12.5px;color:#e2e2e2;font-weight:400;top:51.42px;-webkit-text-stroke:0.3px #e2e2e2;left:1283px;width:400px;text-align:center;">Animation</div><div class="a t" style="font-size:12.5px;line-height:12.5px;color:#14c2d0;font-weight:400;top:51.42px;-webkit-text-stroke:0.3px #14c2d0;left:1355px;width:400px;text-align:center;">Adjust</div><div class="a t" style="font-size:12.5px;line-height:12.5px;color:#e2e2e2;font-weight:400;top:51.42px;-webkit-text-stroke:0.3px #e2e2e2;left:1425px;width:400px;text-align:center;">AI stylize</div><div class="a" style="left:1196px;top:91px;width:463px;height:24px;background:#1c1c1c;border-radius:5px;"></div><div class="a" style="left:1196px;top:91px;width:93px;height:24px;background:#3a3a3a;border-radius:5px;"></div><div class="a t" style="font-size:11px;line-height:11px;color:#d8d8d8;font-weight:400;top:97.49px;-webkit-text-stroke:0.15px #d8d8d8;left:1042px;width:400px;text-align:center;">Basic</div><div class="a t" style="font-size:11px;line-height:11px;color:#d8d8d8;font-weight:400;top:97.49px;-webkit-text-stroke:0.15px #d8d8d8;left:1135px;width:400px;text-align:center;">HSL</div><div class="a t" style="font-size:11px;line-height:11px;color:#d8d8d8;font-weight:400;top:97.49px;-webkit-text-stroke:0.15px #d8d8d8;left:1228px;width:400px;text-align:center;">Curves</div><div class="a t" style="font-size:11px;line-height:11px;color:#d8d8d8;font-weight:400;top:97.49px;-webkit-text-stroke:0.15px #d8d8d8;left:1320px;width:400px;text-align:center;">Color wheel</div><div class="a t" style="font-size:11px;line-height:11px;color:#d8d8d8;font-weight:400;top:97.49px;-webkit-text-stroke:0.15px #d8d8d8;left:1412px;width:400px;text-align:center;">Mask</div><div class="a" style="left:1196px;top:127px;width:463px;height:1px;background:#353535;border-radius:0px;"></div><div class="a" style="left:1196px;top:149px;width:12px;height:12px;background:#4e4e4e;border-radius:3px;"></div><div class="a t" style="font-size:11.5px;line-height:11.5px;color:#e0e0e0;font-weight:400;top:149.07px;-webkit-text-stroke:0.3px #e0e0e0;left:1216px;">Auto adjust</div><svg class="a" style="left:1281px;top:149.5px;" width="13" height="12" viewBox="0 0 13 12" fill="none"><path d="M2 1.5h8l2 2.5-6 6-6-6z" fill="#8b6cf5"/><path d="M6.5 9.2l1.6 1.6 3.2-3.4" stroke="#fff" stroke-width="1.1"/><path d="M8.2 2.8l.5 1 1 .4-1 .4-.5 1-.5-1-1-.4 1-.4z" fill="#fff"/></svg><svg class="a" style="left:1298px;top:153px;" width="7" height="5" viewBox="0 0 7 5" fill="none"><path d="M0 0h7L3.5 4z" fill="#9a9a9a"/></svg><svg class="a" style="left:1601px;top:148px;" width="14" height="14" viewBox="0 0 14 14" fill="none"><path d="M2.2 5.2A5.3 5.3 0 1 1 1.6 8" stroke="#6a6a6a" stroke-width="1.3"/><path d="M0.8 3.2v2.8h2.8" stroke="#6a6a6a" stroke-width="1.3"/></svg><svg class="a" style="left:1627px;top:148px;" width="33" height="14" viewBox="0 0 33 14" fill="none"><path d="M5.5 2.5L1.5 7l4 4.5M16 1.2l5.8 5.8-5.8 5.8-5.8-5.8zM26.5 2.5l4 4.5-4 4.5" stroke="#6a6a6a" stroke-width="1.2" stroke-linejoin="round"/></svg><div class="a" style="left:1196px;top:182px;width:463px;height:1px;background:#353535;border-radius:0px;"></div><div class="a" style="left:1196px;top:204px;width:12px;height:12px;background:#4e4e4e;border-radius:3px;"></div><div class="a t" style="font-size:11.5px;line-height:11.5px;color:#e0e0e0;font-weight:400;top:204.07px;-webkit-text-stroke:0.3px #e0e0e0;left:1216px;">Color match</div><svg class="a" style="left:1285px;top:204.5px;" width="13" height="12" viewBox="0 0 13 12" fill="none"><path d="M2 1.5h8l2 2.5-6 6-6-6z" fill="#8b6cf5"/><path d="M6.5 9.2l1.6 1.6 3.2-3.4" stroke="#fff" stroke-width="1.1"/><path d="M8.2 2.8l.5 1 1 .4-1 .4-.5 1-.5-1-1-.4 1-.4z" fill="#fff"/></svg><svg class="a" style="left:1302px;top:208px;" width="7" height="5" viewBox="0 0 7 5" fill="none"><path d="M0 0h7L3.5 4z" fill="#9a9a9a"/></svg><svg class="a" style="left:1601px;top:203px;" width="14" height="14" viewBox="0 0 14 14" fill="none"><path d="M2.2 5.2A5.3 5.3 0 1 1 1.6 8" stroke="#6a6a6a" stroke-width="1.3"/><path d="M0.8 3.2v2.8h2.8" stroke="#6a6a6a" stroke-width="1.3"/></svg><svg class="a" style="left:1627px;top:203px;" width="33" height="14" viewBox="0 0 33 14" fill="none"><path d="M5.5 2.5L1.5 7l4 4.5M16 1.2l5.8 5.8-5.8 5.8-5.8-5.8zM26.5 2.5l4 4.5-4 4.5" stroke="#6a6a6a" stroke-width="1.2" stroke-linejoin="round"/></svg><div class="a" style="left:1196px;top:237px;width:463px;height:1px;background:#353535;border-radius:0px;"></div><div class="a" style="left:1196px;top:259px;width:12px;height:12px;background:#4e4e4e;border-radius:3px;"></div><div class="a t" style="font-size:11.5px;line-height:11.5px;color:#e0e0e0;font-weight:400;top:259.07px;-webkit-text-stroke:0.3px #e0e0e0;left:1216px;">Color correction</div><svg class="a" style="left:1304px;top:259.5px;" width="13" height="12" viewBox="0 0 13 12" fill="none"><path d="M2 1.5h8l2 2.5-6 6-6-6z" fill="#8b6cf5"/><path d="M6.5 9.2l1.6 1.6 3.2-3.4" stroke="#fff" stroke-width="1.1"/><path d="M8.2 2.8l.5 1 1 .4-1 .4-.5 1-.5-1-1-.4 1-.4z" fill="#fff"/></svg><svg class="a" style="left:1322px;top:263px;" width="7" height="5" viewBox="0 0 7 5" fill="none"><path d="M0 0h7L3.5 4z" fill="#9a9a9a"/></svg><svg class="a" style="left:1601px;top:258px;" width="14" height="14" viewBox="0 0 14 14" fill="none"><path d="M2.2 5.2A5.3 5.3 0 1 1 1.6 8" stroke="#6a6a6a" stroke-width="1.3"/><path d="M0.8 3.2v2.8h2.8" stroke="#6a6a6a" stroke-width="1.3"/></svg><svg class="a" style="left:1627px;top:258px;" width="33" height="14" viewBox="0 0 33 14" fill="none"><path d="M5.5 2.5L1.5 7l4 4.5M16 1.2l5.8 5.8-5.8 5.8-5.8-5.8zM26.5 2.5l4 4.5-4 4.5" stroke="#6a6a6a" stroke-width="1.2" stroke-linejoin="round"/></svg><div class="a" style="left:1196px;top:292px;width:463px;height:1px;background:#353535;border-radius:0px;"></div><div class="a" style="left:1196px;top:314px;width:12px;height:12px;background:#1fc0cf;border-radius:3px;"></div><svg class="a" style="left:1198px;top:316px;" width="9" height="8" viewBox="0 0 9 8" fill="none"><path d="M1 4l2.5 2.5L8 1.5" stroke="#fff" stroke-width="1.5"/></svg><div class="a t" style="font-size:11.5px;line-height:11.5px;color:#e0e0e0;font-weight:400;top:314.07px;-webkit-text-stroke:0.3px #e0e0e0;left:1216px;">LUT</div><svg class="a" style="left:1242px;top:317px;" width="7" height="5" viewBox="0 0 7 5" fill="none"><path d="M0 5h7L3.5 0.5z" fill="#9a9a9a"/></svg><svg class="a" style="left:1601px;top:313px;" width="14" height="14" viewBox="0 0 14 14" fill="none"><path d="M2.2 5.2A5.3 5.3 0 1 1 1.6 8" stroke="#e0e0e0" stroke-width="1.3"/><path d="M0.8 3.2v2.8h2.8" stroke="#e0e0e0" stroke-width="1.3"/></svg><svg class="a" style="left:1627px;top:313px;" width="33" height="14" viewBox="0 0 33 14" fill="none"><path d="M5.5 2.5L1.5 7l4 4.5M16 1.2l5.8 5.8-5.8 5.8-5.8-5.8zM26.5 2.5l4 4.5-4 4.5" stroke="#6a6a6a" stroke-width="1.2" stroke-linejoin="round"/></svg><div class="a t" style="font-size:11.5px;line-height:11.5px;color:#dcdcdc;font-weight:400;top:353.07px;-webkit-text-stroke:0.15px #dcdcdc;left:1196px;">Name</div><div class="a" style="left:1316px;top:347px;width:343px;height:22px;background:#3a3a3a;border-radius:4px;"></div><div class="a t" style="font-size:11.5px;line-height:11.5px;color:#e0e0e0;font-weight:400;top:353.07px;-webkit-text-stroke:0.15px #e0e0e0;left:1324px;">None</div><svg class="a" style="left:1643px;top:355px;" width="9" height="6" viewBox="0 0 9 6" fill="none"><path d="M1 1l3.5 3.5L8 1" stroke="#e0e0e0" stroke-width="1.5"/></svg><div class="a t" style="font-size:10.5px;line-height:10.5px;color:#555;font-weight:400;top:386.91px;left:1196px;">Intensity</div><div class="a" style="left:1196px;top:408px;width:329px;height:2px;background:#4a4a4a;border-radius:1px;"></div><div class="a" style="left:1525px;top:403px;width:8px;height:12px;background:#555;border-radius:3px;"></div><div class="a" style="left:1551px;top:398px;width:54px;height:22px;background:#1e1e1e;border-radius:4px;"></div><div class="a t" style="font-size:11px;line-height:11px;color:#5a5a5a;font-weight:400;top:404.49px;left:1378px;width:400px;text-align:center;">100</div><div class="a" style="left:1607px;top:398px;width:16px;height:22px;background:#2c2c2c;border-radius:4px;"></div><svg class="a" style="left:1610px;top:401px;" width="10" height="16" viewBox="0 0 10 16" fill="none"><path d="M2 6l3-3 3 3M2 10l3 3 3-3" stroke="#6a6a6a" stroke-width="1.2"/></svg><svg class="a" style="left:1627px;top:402px;" width="33" height="14" viewBox="0 0 33 14" fill="none"><path d="M5.5 2.5L1.5 7l4 4.5M16 1.2l5.8 5.8-5.8 5.8-5.8-5.8zM26.5 2.5l4 4.5-4 4.5" stroke="#6a6a6a" stroke-width="1.2" stroke-linejoin="round"/></svg><div class="a t" style="font-size:11.5px;line-height:11.5px;color:#e0e0e0;font-weight:400;top:437.07px;-webkit-text-stroke:0.15px #e0e0e0;left:1196px;">Protect skin tone</div><div class="a t" style="font-size:11.3px;line-height:11.3px;color:#9a9a9a;font-weight:400;top:450.23px;left:1196px;">Turn it on to make skin tones more natural.</div><div class="a" style="left:1611px;top:441px;width:36px;height:16px;background:#4a4a4a;border-radius:8px;"></div><div class="a" style="left:1614.5px;top:444.5px;width:9px;height:9px;border-radius:50%;background:#f2f2f2;"></div><div class="a" style="left:1196px;top:478px;width:463px;height:1px;background:#353535;border-radius:0px;"></div><div class="a" style="left:1184px;top:484px;width:487px;height:36px;background:#2e2e2e;border-radius:0px;border-radius:0 0 8px 8px;"></div><div class="a" style="left:1491px;top:491px;width:88px;height:22px;background:#00bcd0;border-radius:4px;"></div><div class="a t" style="font-size:11.3px;line-height:11.3px;color:#ffffff;font-weight:400;top:497.23px;-webkit-text-stroke:0.3px #ffffff;left:1335px;width:400px;text-align:center;">Save as preset</div><div class="a" style="left:1587px;top:491px;width:72px;height:22px;background:#474747;border-radius:4px;"></div><div class="a t" style="font-size:11.5px;line-height:11.5px;color:#f0f0f0;font-weight:400;top:497.07px;-webkit-text-stroke:0.3px #f0f0f0;left:1423px;width:400px;text-align:center;">Apply to all</div><div class="a" style="left:9px;top:526px;width:1662px;height:467px;background:#262626;border-radius:0px;"></div><div class="a" style="left:9px;top:558px;width:1662px;height:1px;background:#1a1a1a;border-radius:0px;"></div><svg class="a" style="left:19px;top:535px;" width="12" height="15" viewBox="0 0 12 15" fill="none"><path d="M1.5 1.5l9 5.5-4 1.2 2.8 4.6-1.8 1-2.8-4.6-3.2 3z" stroke="#d0d0d0" stroke-width="1.3" stroke-linejoin="round"/></svg><svg class="a" style="left:43px;top:540px;" width="9" height="6" viewBox="0 0 9 6" fill="none"><path d="M1 1l3.5 3.5L8 1" stroke="#f0f0f0" stroke-width="1.6"/></svg><div class="a" style="left:65px;top:534px;width:1px;height:15px;background:#3a3a3a;border-radius:0px;"></div><svg class="a" style="left:79px;top:535px;" width="14" height="14" viewBox="0 0 14 14" fill="none"><path d="M4.5 1L1.5 4l3 3" stroke="#d0d0d0" stroke-width="1.4"/><path d="M1.8 4H8a4.5 4.5 0 0 1 0 9H3" stroke="#d0d0d0" stroke-width="1.4"/></svg><svg class="a" style="left:115px;top:535px;" width="14" height="14" viewBox="0 0 14 14" fill="none"><path d="M9.5 1l3 3-3 3" stroke="#6a6a6a" stroke-width="1.4"/><path d="M12.2 4H6a4.5 4.5 0 0 0 0 9h5" stroke="#6a6a6a" stroke-width="1.4"/></svg><svg class="a" style="left:152px;top:535px;" width="13" height="14" viewBox="0 0 13 14" fill="none"><path d="M1 1.5h3v11H1M12 1.5H9v11h3" stroke="#d0d0d0" stroke-width="1.5"/></svg><svg class="a" style="left:188px;top:535px;" width="13" height="14" viewBox="0 0 13 14" fill="none"><path d="M1 1.5h3v11H1" stroke="#6a6a6a" stroke-width="1.5" stroke-dasharray="2 1.5"/><path d="M12 1.5H9v11h3" stroke="#d0d0d0" stroke-width="1.5"/></svg><svg class="a" style="left:224px;top:535px;" width="13" height="14" viewBox="0 0 13 14" fill="none"><path d="M1 1.5h3v11H1" stroke="#d0d0d0" stroke-width="1.5"/><path d="M12 1.5H9v11h3" stroke="#6a6a6a" stroke-width="1.5" stroke-dasharray="2 1.5"/></svg><svg class="a" style="left:259px;top:534px;" width="14" height="15" viewBox="0 0 14 15" fill="none"><path d="M1 3.5h12M5 3.5V1.5h4v2M2.5 3.5l1 10h7l1-10" stroke="#d0d0d0" stroke-width="1.4"/></svg><svg class="a" style="left:296px;top:535px;" width="12" height="14" viewBox="0 0 12 14" fill="none"><path d="M1.2 1.2h9.6v8.3L6 13 1.2 9.5z" stroke="#d0d0d0" stroke-width="1.4" stroke-linejoin="round"/></svg><svg class="a" style="left:330px;top:534px;" width="16" height="16" viewBox="0 0 16 16" fill="none"><path d="M4 1v10.5h11M1 4h10.5v11" stroke="#d0d0d0" stroke-width="1.5"/><path d="M6.5 8.5l2.5-2.5" stroke="#888" stroke-width="1"/></svg><svg class="a" style="left:365px;top:533px;" width="20" height="18" viewBox="0 0 20 18" fill="none"><path d="M5 13l2.5-7v7zM12 13l-2.5-7v7z" stroke="#d0d0d0" stroke-width="1.3"/><path d="M4 8a6 6 0 0 1 9-5M13 1.5l.5 2-2 .5M2 12a5 5 0 0 0 3 4M4.8 16.2l-.5-1.8" stroke="#d0d0d0" stroke-width="1.2"/><path d="M19 13v4h-4z" fill="#d0d0d0"/></svg><div class="a" style="left:398px;top:534px;width:1px;height:15px;background:#3a3a3a;border-radius:0px;"></div><svg class="a" style="left:415px;top:534px;" width="16" height="15" viewBox="0 0 16 15" fill="none"><rect x="1" y="4" width="13" height="10" rx="1.5" fill="#6a6a6a"/><path d="M3.5 8h5M3.5 11h8" stroke="#262626" stroke-width="1.3"/><path d="M13 0.5l.7 1.6 1.6.7-1.6.7-.7 1.6-.7-1.6-1.6-.7 1.6-.7z" fill="#6a6a6a"/></svg><svg class="a" style="left:451px;top:534px;" width="17" height="15" viewBox="0 0 17 15" fill="none"><path d="M1 4h4l3-2v12l-3-2H1z" fill="#d0d0d0"/><path d="M11 8v3.5a2 2 0 0 1-2 2" stroke="#d0d0d0" stroke-width="1.3"/><path d="M14 0.5l.8 1.8 1.8.8-1.8.8-.8 1.8-.8-1.8-1.8-.8 1.8-.8z" fill="#d0d0d0"/></svg><svg class="a" style="left:487px;top:534px;" width="17" height="15" viewBox="0 0 17 15" fill="none"><circle cx="7" cy="6" r="3" fill="#d0d0d0"/><path d="M1.5 14c0-3 2.5-5 5.5-5s5.5 2 5.5 5z" fill="#d0d0d0"/><path d="M14 0.5l.8 1.8 1.8.8-1.8.8-.8 1.8-.8-1.8-1.8-.8 1.8-.8z" fill="#d0d0d0"/><path d="M1 3h2M11 3h1M1 10h1" stroke="#777" stroke-width="1"/></svg><svg class="a" style="left:522px;top:534px;" width="17" height="15" viewBox="0 0 17 15" fill="none"><path d="M4 13.5l7.5-7.5 2 2L6 15.5z" fill="#d0d0d0"/><path d="M3.5 0.5l.9 2 2 .9-2 .9-.9 2-.9-2-2-.9 2-.9zM14 1l.7 1.5 1.5.7-1.5.7-.7 1.5-.7-1.5-1.5-.7 1.5-.7zM12 10l.6 1.3 1.3.6-1.3.6-.6 1.3-.6-1.3-1.3-.6 1.3-.6z" fill="#d0d0d0"/></svg><svg class="a" style="left:559px;top:535px;" width="17" height="16" viewBox="0 0 17 16" fill="none"><rect x="1" y="1" width="13.5" height="12" rx="2" fill="#d0d0d0"/><path d="M3.5 3.5v7M3.5 7h3M6.5 3.5v7M8.8 3.5v7h1.5a2.3 3.5 0 0 0 0-7z" stroke="#262626" stroke-width="1.3"/><path d="M16.5 12v4h-4z" fill="#d0d0d0"/></svg><svg class="a" style="left:595px;top:533px;" width="18" height="18" viewBox="0 0 18 18" fill="none"><rect x="1" y="4" width="13.5" height="11" rx="1.5" fill="#d0d0d0"/><path d="M5.5 7l4.5 2.5-4.5 2.5z" fill="#262626"/><path d="M9.5 3h1M12 1v5M14 2.5v2M16 3h1" stroke="#d0d0d0" stroke-width="1.2"/><path d="M17.5 14v4h-4z" fill="#d0d0d0"/></svg><svg class="a" style="left:631px;top:533px;" width="18" height="18" viewBox="0 0 18 18" fill="none"><path d="M1.5 8.5h1M4.5 5v7M7.5 2v13M10.5 6v5M13.5 8.5h1" stroke="#d0d0d0" stroke-width="1.4"/><path d="M14 0.5l.8 1.8 1.8.8-1.8.8-.8 1.8-.8-1.8-1.8-.8 1.8-.8z" fill="#d0d0d0"/><path d="M17.5 14v4h-4z" fill="#d0d0d0"/></svg><svg class="a" style="left:1235px;top:535px;" width="13" height="15" viewBox="0 0 13 15" fill="none"><rect x="4" y="1" width="5" height="8" rx="2.5" stroke="#d0d0d0" stroke-width="1.4"/><path d="M1.5 7a5 5 0 0 0 10 0M6.5 12v3" stroke="#d0d0d0" stroke-width="1.4"/></svg><div class="a" style="left:1265px;top:526px;width:1px;height:16px;background:#3a3a3a;border-radius:0px;"></div><div class="a" style="left:1278px;top:530px;width:24px;height:23px;background:#1b1b1b;border-radius:5px;"></div><div class="a" style="left:1314px;top:530px;width:24px;height:23px;background:#1b1b1b;border-radius:5px;"></div><div class="a" style="left:1350px;top:530px;width:38px;height:23px;background:#1b1b1b;border-radius:5px;"></div><div class="a" style="left:1374px;top:530px;width:1px;height:23px;background:#2e2e2e;border-radius:0px;"></div><svg class="a" style="left:1280px;top:536px;" width="20" height="11" viewBox="0 0 20 11" fill="none"><rect x="0.5" y="1.5" width="5" height="8" rx="1.5" fill="#1fc0cf"/><rect x="12" y="1.5" width="7.5" height="8" rx="1.5" fill="#1fc0cf"/><path d="M6 5.5h5M8.5 3.5l-2 2 2 2" stroke="#1fc0cf" stroke-width="1.3"/></svg><svg class="a" style="left:1315px;top:532px;" width="22" height="19" viewBox="0 0 22 19" fill="none"><rect x="1" y="6" width="20" height="8" rx="2.5" fill="#1fc0cf"/><path d="M11 7.5v5" stroke="#1b1b1b" stroke-width="1.5"/><path d="M11 1v2.5M5 2l1.5 2M17 2l-1.5 2M11 15.5V18M5 18l1.5-2M17 18l-1.5-2" stroke="#1fc0cf" stroke-width="1.3"/></svg><svg class="a" style="left:1352px;top:536px;" width="20" height="11" viewBox="0 0 20 11" fill="none"><path d="M7.5 2H3.5a2.2 2.2 0 0 0-2.2 2.2v2.6A2.2 2.2 0 0 0 3.5 9h4M12.5 2h4a2.2 2.2 0 0 1 2.2 2.2v2.6A2.2 2.2 0 0 1 16.5 9h-4" stroke="#14c2d0" stroke-width="2.6"/><path d="M6 5.5h8" stroke="#14c2d0" stroke-width="2"/></svg><svg class="a" style="left:1377px;top:539px;" width="9" height="6" viewBox="0 0 9 6" fill="none"><path d="M1 1l3.5 3.5L8 1" stroke="#f0f0f0" stroke-width="1.6"/></svg><svg class="a" style="left:1402px;top:534px;" width="20" height="16" viewBox="0 0 20 16" fill="none"><path d="M6 3.5H1.5v9H6M10 3.5h4.5v4" stroke="#c8c8c8" stroke-width="1.5"/><path d="M8 0.5v15" stroke="#c8c8c8" stroke-width="1.4"/><path d="M12 9l6 2.5-2.5 1 2 2.5-1 .8-2-2.5-1.5 2z" fill="#c8c8c8"/></svg><svg class="a" style="left:1428px;top:539px;" width="9" height="6" viewBox="0 0 9 6" fill="none"><path d="M1 1l3.5 3.5L8 1" stroke="#f0f0f0" stroke-width="1.6"/></svg><div class="a" style="left:1450px;top:526px;width:1px;height:16px;background:#3a3a3a;border-radius:0px;"></div><svg class="a" style="left:1465px;top:535px;" width="19" height="14" viewBox="0 0 19 14" fill="none"><path d="M1.2 1.5v5.5h4M17.8 1.5v5.5h-4M1.2 1.5h16.6M5 1.5v2.5M9.5 1.5v2.5M14 1.5v2.5" stroke="#c8c8c8" stroke-width="1.4"/><circle cx="9.5" cy="9" r="2.8" stroke="#c8c8c8" stroke-width="1.4"/><path d="M11.5 11l2 2" stroke="#c8c8c8" stroke-width="1.4"/></svg><svg class="a" style="left:1503px;top:535px;" width="15" height="15" viewBox="0 0 15 15" fill="none"><circle cx="7" cy="7" r="6" stroke="#c8c8c8" stroke-width="1.4"/><path d="M4.5 7h5M11.5 11.5l2 2" stroke="#c8c8c8" stroke-width="1.4"/></svg><div class="a" style="left:1535px;top:541px;width:96px;height:2px;background:#050505;border-radius:0px;"></div><div class="a" style="left:1535px;top:541px;width:14px;height:2px;background:#f0f0f0;border-radius:0px;"></div><div class="a" style="left:1547px;top:536px;width:8px;height:12px;background:#f2f2f2;border-radius:3px;"></div><svg class="a" style="left:1647px;top:535px;" width="15" height="15" viewBox="0 0 15 15" fill="none"><circle cx="7" cy="7" r="6" stroke="#c8c8c8" stroke-width="1.4"/><path d="M4.5 7h5M7 4.5v5M11.5 11.5l2 2" stroke="#c8c8c8" stroke-width="1.4"/></svg><div class="a" style="left:233px;top:559px;width:505px;height:2px;background:#5a4810;border-radius:0px;"></div><div class="a" style="left:234px;top:562px;width:1px;height:11px;background:#5a5a5a;border-radius:0px;"></div><div class="a t" style="font-size:9.5px;line-height:9.5px;color:#8a8a8a;font-weight:400;top:564.26px;left:238px;">00:00</div><div class="a" style="left:276px;top:562px;width:1px;height:6px;background:#444;border-radius:0px;"></div><div class="a" style="left:297px;top:562px;width:1px;height:6px;background:#444;border-radius:0px;"></div><div class="a" style="left:318px;top:562px;width:1px;height:6px;background:#444;border-radius:0px;"></div><div class="a" style="left:339px;top:562px;width:1px;height:6px;background:#444;border-radius:0px;"></div><div class="a" style="left:360px;top:562px;width:1px;height:6px;background:#444;border-radius:0px;"></div><div class="a" style="left:381px;top:562px;width:1px;height:6px;background:#444;border-radius:0px;"></div><div class="a" style="left:402px;top:562px;width:1px;height:6px;background:#444;border-radius:0px;"></div><div class="a" style="left:424px;top:562px;width:1px;height:6px;background:#444;border-radius:0px;"></div><div class="a" style="left:445px;top:562px;width:1px;height:11px;background:#5a5a5a;border-radius:0px;"></div><div class="a t" style="font-size:9.5px;line-height:9.5px;color:#8a8a8a;font-weight:400;top:564.26px;left:449px;">00:03</div><div class="a" style="left:487px;top:562px;width:1px;height:6px;background:#444;border-radius:0px;"></div><div class="a" style="left:508px;top:562px;width:1px;height:6px;background:#444;border-radius:0px;"></div><div class="a" style="left:529px;top:562px;width:1px;height:6px;background:#444;border-radius:0px;"></div><div class="a" style="left:550px;top:562px;width:1px;height:6px;background:#444;border-radius:0px;"></div><div class="a" style="left:571px;top:562px;width:1px;height:6px;background:#444;border-radius:0px;"></div><div class="a" style="left:592px;top:562px;width:1px;height:6px;background:#444;border-radius:0px;"></div><div class="a" style="left:613px;top:562px;width:1px;height:6px;background:#444;border-radius:0px;"></div><div class="a" style="left:634px;top:562px;width:1px;height:6px;background:#444;border-radius:0px;"></div><div class="a" style="left:656px;top:562px;width:1px;height:11px;background:#5a5a5a;border-radius:0px;"></div><div class="a t" style="font-size:9.5px;line-height:9.5px;color:#8a8a8a;font-weight:400;top:564.26px;left:660px;">00:06</div><div class="a" style="left:698px;top:562px;width:1px;height:6px;background:#444;border-radius:0px;"></div><div class="a" style="left:719px;top:562px;width:1px;height:6px;background:#444;border-radius:0px;"></div><div class="a" style="left:740px;top:562px;width:1px;height:6px;background:#444;border-radius:0px;"></div><div class="a" style="left:761px;top:562px;width:1px;height:6px;background:#444;border-radius:0px;"></div><div class="a" style="left:782px;top:562px;width:1px;height:6px;background:#444;border-radius:0px;"></div><div class="a" style="left:803px;top:562px;width:1px;height:6px;background:#444;border-radius:0px;"></div><div class="a" style="left:824px;top:562px;width:1px;height:6px;background:#444;border-radius:0px;"></div><div class="a" style="left:846px;top:562px;width:1px;height:6px;background:#444;border-radius:0px;"></div><div class="a" style="left:867px;top:562px;width:1px;height:11px;background:#5a5a5a;border-radius:0px;"></div><div class="a t" style="font-size:9.5px;line-height:9.5px;color:#8a8a8a;font-weight:400;top:564.26px;left:871px;">00:09</div><div class="a" style="left:909px;top:562px;width:1px;height:6px;background:#444;border-radius:0px;"></div><div class="a" style="left:930px;top:562px;width:1px;height:6px;background:#444;border-radius:0px;"></div><div class="a" style="left:951px;top:562px;width:1px;height:6px;background:#444;border-radius:0px;"></div><div class="a" style="left:972px;top:562px;width:1px;height:6px;background:#444;border-radius:0px;"></div><div class="a" style="left:993px;top:562px;width:1px;height:6px;background:#444;border-radius:0px;"></div><div class="a" style="left:1014px;top:562px;width:1px;height:6px;background:#444;border-radius:0px;"></div><div class="a" style="left:1035px;top:562px;width:1px;height:6px;background:#444;border-radius:0px;"></div><div class="a" style="left:1056px;top:562px;width:1px;height:6px;background:#444;border-radius:0px;"></div><div class="a" style="left:1078px;top:562px;width:1px;height:11px;background:#5a5a5a;border-radius:0px;"></div><div class="a t" style="font-size:9.5px;line-height:9.5px;color:#8a8a8a;font-weight:400;top:564.26px;left:1082px;">00:12</div><div class="a" style="left:1120px;top:562px;width:1px;height:6px;background:#444;border-radius:0px;"></div><div class="a" style="left:1141px;top:562px;width:1px;height:6px;background:#444;border-radius:0px;"></div><div class="a" style="left:1162px;top:562px;width:1px;height:6px;background:#444;border-radius:0px;"></div><div class="a" style="left:1183px;top:562px;width:1px;height:6px;background:#444;border-radius:0px;"></div><div class="a" style="left:1204px;top:562px;width:1px;height:6px;background:#444;border-radius:0px;"></div><div class="a" style="left:1225px;top:562px;width:1px;height:6px;background:#444;border-radius:0px;"></div><div class="a" style="left:1246px;top:562px;width:1px;height:6px;background:#444;border-radius:0px;"></div><div class="a" style="left:1268px;top:562px;width:1px;height:6px;background:#444;border-radius:0px;"></div><div class="a" style="left:1289px;top:562px;width:1px;height:11px;background:#5a5a5a;border-radius:0px;"></div><div class="a t" style="font-size:9.5px;line-height:9.5px;color:#8a8a8a;font-weight:400;top:564.26px;left:1293px;">00:15</div><div class="a" style="left:1331px;top:562px;width:1px;height:6px;background:#444;border-radius:0px;"></div><div class="a" style="left:1352px;top:562px;width:1px;height:6px;background:#444;border-radius:0px;"></div><div class="a" style="left:1373px;top:562px;width:1px;height:6px;background:#444;border-radius:0px;"></div><div class="a" style="left:1394px;top:562px;width:1px;height:6px;background:#444;border-radius:0px;"></div><div class="a" style="left:1415px;top:562px;width:1px;height:6px;background:#444;border-radius:0px;"></div><div class="a" style="left:1436px;top:562px;width:1px;height:6px;background:#444;border-radius:0px;"></div><div class="a" style="left:1457px;top:562px;width:1px;height:6px;background:#444;border-radius:0px;"></div><div class="a" style="left:1478px;top:562px;width:1px;height:6px;background:#444;border-radius:0px;"></div><div class="a" style="left:1500px;top:562px;width:1px;height:11px;background:#5a5a5a;border-radius:0px;"></div><div class="a t" style="font-size:9.5px;line-height:9.5px;color:#8a8a8a;font-weight:400;top:564.26px;left:1504px;">00:18</div><div class="a" style="left:1542px;top:562px;width:1px;height:6px;background:#444;border-radius:0px;"></div><div class="a" style="left:1563px;top:562px;width:1px;height:6px;background:#444;border-radius:0px;"></div><div class="a" style="left:1584px;top:562px;width:1px;height:6px;background:#444;border-radius:0px;"></div><div class="a" style="left:1605px;top:562px;width:1px;height:6px;background:#444;border-radius:0px;"></div><div class="a" style="left:1626px;top:562px;width:1px;height:6px;background:#444;border-radius:0px;"></div><div class="a" style="left:1647px;top:562px;width:1px;height:6px;background:#444;border-radius:0px;"></div><div class="a" style="left:132px;top:586px;width:1px;height:407px;background:#1a1a1a;border-radius:0px;"></div><div class="a" style="left:9px;top:681px;width:123px;height:62px;background:#2b2b2b;border-radius:0px;"></div><div class="a" style="left:9px;top:747px;width:123px;height:76px;background:#2b2b2b;border-radius:0px;"></div><div class="a" style="left:230px;top:681px;width:1435px;height:62px;background:#2e2e2e;border-radius:0px;"></div><div class="a" style="left:233px;top:747px;width:1432px;height:76px;background:#2a2a2a;border-radius:0px;"></div><div class="a" style="left:233px;top:747px;width:1420px;height:73px;background:#2d2d2d;border-radius:8px;"></div><svg class="a" style="left:17px;top:707px;" width="12" height="10" viewBox="0 0 12 10" fill="none"><rect x="0.6" y="0.6" width="10.8" height="8.8" stroke="#6a6a6a" stroke-width="1.1"/><path d="M5 3l2.5 2L5 7z" fill="#6a6a6a"/></svg><svg class="a" style="left:42px;top:706px;" width="9" height="12" viewBox="0 0 9 12" fill="none"><path d="M2 5V3.5a2.5 2.5 0 0 1 5 0" stroke="#e8e8e8" stroke-width="1.3"/><rect x="0.5" y="5.5" width="8" height="6" rx="1" fill="#e8e8e8"/><path d="M2.5 8.5h4" stroke="#2b2b2b" stroke-width="1.2"/></svg><svg class="a" style="left:65px;top:708px;" width="12" height="8" viewBox="0 0 12 8" fill="none"><path d="M0.8 4C3 0.8 9 0.8 11.2 4 9 7.2 3 7.2 0.8 4z" stroke="#e8e8e8" stroke-width="1.2"/><circle cx="6" cy="4" r="1.7" stroke="#e8e8e8" stroke-width="1.1"/></svg><svg class="a" style="left:89px;top:707px;" width="12" height="10" viewBox="0 0 12 10" fill="none"><path d="M1 3.2h2l3-2.5v8.6L3 6.8H1z" stroke="#e8e8e8" stroke-width="1.1"/><path d="M8 3a2.5 2.5 0 0 1 0 4M10 1.5a5 5 0 0 1 0 7" stroke="#e8e8e8" stroke-width="1.1"/></svg><svg class="a" style="left:113px;top:710px;" width="12" height="3" viewBox="0 0 12 3" fill="none"><circle cx="1.5" cy="1.5" r="1" fill="#e8e8e8"/><circle cx="5.5" cy="1.5" r="1" fill="#e8e8e8"/><circle cx="9.5" cy="1.5" r="1" fill="#e8e8e8"/></svg><svg class="a" style="left:17px;top:779.5px;" width="12" height="10" viewBox="0 0 12 10" fill="none"><rect x="0.6" y="0.6" width="10.8" height="8.8" stroke="#6a6a6a" stroke-width="1.1"/><path d="M5 3l2.5 2L5 7z" fill="#6a6a6a"/></svg><svg class="a" style="left:42px;top:778.5px;" width="9" height="12" viewBox="0 0 9 12" fill="none"><path d="M2 5V3.5a2.5 2.5 0 0 1 5 0" stroke="#e8e8e8" stroke-width="1.3"/><rect x="0.5" y="5.5" width="8" height="6" rx="1" fill="#e8e8e8"/><path d="M2.5 8.5h4" stroke="#2b2b2b" stroke-width="1.2"/></svg><svg class="a" style="left:65px;top:780.5px;" width="12" height="8" viewBox="0 0 12 8" fill="none"><path d="M0.8 4C3 0.8 9 0.8 11.2 4 9 7.2 3 7.2 0.8 4z" stroke="#e8e8e8" stroke-width="1.2"/><circle cx="6" cy="4" r="1.7" stroke="#e8e8e8" stroke-width="1.1"/></svg><svg class="a" style="left:89px;top:779.5px;" width="12" height="10" viewBox="0 0 12 10" fill="none"><path d="M1 3.2h2l3-2.5v8.6L3 6.8H1z" stroke="#e8e8e8" stroke-width="1.1"/><path d="M8 3a2.5 2.5 0 0 1 0 4M10 1.5a5 5 0 0 1 0 7" stroke="#e8e8e8" stroke-width="1.1"/></svg><svg class="a" style="left:113px;top:782.5px;" width="12" height="3" viewBox="0 0 12 3" fill="none"><circle cx="1.5" cy="1.5" r="1" fill="#e8e8e8"/><circle cx="5.5" cy="1.5" r="1" fill="#e8e8e8"/><circle cx="9.5" cy="1.5" r="1" fill="#e8e8e8"/></svg><div class="a" style="left:141px;top:766px;width:38px;height:37px;border-radius:4px;background:#2a2a2a;box-sizing:border-box;border:1px dotted #333;"></div><div class="a" style="left:154px;top:760px;width:25px;height:12px;background:#3b3560;border-radius:4px;"></div><div class="a t" style="font-size:9px;line-height:9px;color:#50488a;font-weight:400;top:762.68px;left:-33.5px;width:400px;text-align:center;">Free</div><svg class="a" style="left:152px;top:772px;" width="18" height="13" viewBox="0 0 18 13" fill="none"><path d="M9 1l4 7M13 1L9 8" stroke="#3c3c3c" stroke-width="1"/><circle cx="8" cy="10" r="2" stroke="#3c3c3c"/><circle cx="14" cy="10" r="2" stroke="#3c3c3c"/><path d="M1 8h3M2.5 6.5v3" stroke="#3c3c3c"/></svg><div class="a t" style="font-size:8px;line-height:8px;color:#4a4a4a;font-weight:400;top:789.53px;left:-40.5px;width:400px;text-align:center;font-family:'Liberation Mono',monospace;">AI clip…</div><div class="a" style="left:187px;top:766px;width:38px;height:38px;border-radius:5px;background:#393939;box-sizing:border-box;border:1px dotted #555;"></div><svg class="a" style="left:201px;top:772px;" width="10" height="13" viewBox="0 0 10 13" fill="none"><path d="M2 9l0.5-3L7 1.5l2 2L4.5 8z" stroke="#eee" stroke-width="1.1"/><path d="M1 11.8h8" stroke="#eee" stroke-width="1.4"/></svg><div class="a t" style="font-size:10px;line-height:10px;color:#e8e8e8;font-weight:400;top:788.33px;left:6px;width:400px;text-align:center;">Cover</div><svg class="a" style="left:257px;top:777px;" width="16" height="14" viewBox="0 0 16 14" fill="none"><rect x="1" y="1" width="14" height="12" rx="1" stroke="#a8a8a8" stroke-width="1.3"/><path d="M3.5 1v12M12.5 1v12M3.5 7h9" stroke="#a8a8a8" stroke-width="1.3"/></svg><div class="a" style="left:230px;top:683px;width:509px;height:58px;background:#034e54;border-radius:4px;box-sizing:border-box;border:1.5px solid #f4f4f4;border-left-width:3px;border-right-width:3px;overflow:hidden;"><div class="a" style="left:4px;top:1px;width:38px;height:13px;background:#1c6066;border-radius:3px;"></div><div class="a" style="left:47px;top:1px;width:197px;height:13px;background:#1c6066;border-radius:3px;"></div><div class="a" style="left:249px;top:1px;width:59px;height:13px;background:#1c6066;border-radius:3px;"></div><div class="a" style="left:1px;top:16px;width:501px;height:24px;overflow:hidden;"><div class="a" style="left:0px;top:0;width:50px;height:24px;background:linear-gradient(90deg,#ececec 0%,#f2f2f2 45%,#d8d8d8 70%,#c4c4c4 88%,#e6e6e6 100%);"><div class="a" style="left:17px;top:0;width:20px;height:24px;background:#9cb8e6;clip-path:polygon(8% 0,92% 0,100% 100%,0 100%);"></div><div class="a" style="left:13px;top:0;width:4px;height:8px;background:#e0a888;opacity:0;"></div><div class="a" style="left:37px;top:0;width:4px;height:8px;background:#e0a888;opacity:0;"></div></div><div class="a" style="left:50px;top:0;width:50px;height:24px;background:linear-gradient(90deg,#ececec 0%,#f2f2f2 45%,#d8d8d8 70%,#c4c4c4 88%,#e6e6e6 100%);"><div class="a" style="left:17px;top:0;width:20px;height:24px;background:#9cb8e6;clip-path:polygon(8% 0,92% 0,100% 100%,0 100%);"></div><div class="a" style="left:13px;top:0;width:4px;height:8px;background:#e0a888;opacity:0;"></div><div class="a" style="left:37px;top:0;width:4px;height:8px;background:#e0a888;opacity:0;"></div></div><div class="a" style="left:100px;top:0;width:50px;height:24px;background:linear-gradient(90deg,#ececec 0%,#f2f2f2 45%,#d8d8d8 70%,#c4c4c4 88%,#e6e6e6 100%);"><div class="a" style="left:17px;top:0;width:20px;height:24px;background:#9cb8e6;clip-path:polygon(8% 0,92% 0,100% 100%,0 100%);"></div><div class="a" style="left:13px;top:0;width:4px;height:8px;background:#e0a888;opacity:0;"></div><div class="a" style="left:37px;top:0;width:4px;height:8px;background:#e0a888;opacity:0;"></div></div><div class="a" style="left:150px;top:0;width:50px;height:24px;background:linear-gradient(90deg,#ececec 0%,#f2f2f2 45%,#d8d8d8 70%,#c4c4c4 88%,#e6e6e6 100%);"><div class="a" style="left:17px;top:0;width:20px;height:24px;background:#9cb8e6;clip-path:polygon(8% 0,92% 0,100% 100%,0 100%);"></div><div class="a" style="left:13px;top:0;width:4px;height:8px;background:#e0a888;opacity:0;"></div><div class="a" style="left:37px;top:0;width:4px;height:8px;background:#e0a888;opacity:0;"></div></div><div class="a" style="left:200px;top:0;width:50px;height:24px;background:linear-gradient(90deg,#ececec 0%,#f2f2f2 45%,#d8d8d8 70%,#c4c4c4 88%,#e6e6e6 100%);"><div class="a" style="left:17px;top:0;width:20px;height:24px;background:#9cb8e6;clip-path:polygon(8% 0,92% 0,100% 100%,0 100%);"></div><div class="a" style="left:13px;top:0;width:4px;height:8px;background:#e0a888;opacity:0;"></div><div class="a" style="left:37px;top:0;width:4px;height:8px;background:#e0a888;opacity:0;"></div></div><div class="a" style="left:250px;top:0;width:50px;height:24px;background:linear-gradient(90deg,#ececec 0%,#f2f2f2 45%,#d8d8d8 70%,#c4c4c4 88%,#e6e6e6 100%);"><div class="a" style="left:17px;top:0;width:20px;height:24px;background:#9cb8e6;clip-path:polygon(8% 0,92% 0,100% 100%,0 100%);"></div><div class="a" style="left:13px;top:0;width:4px;height:8px;background:#e0a888;opacity:0;"></div><div class="a" style="left:37px;top:0;width:4px;height:8px;background:#e0a888;opacity:0;"></div></div><div class="a" style="left:300px;top:0;width:50px;height:24px;background:linear-gradient(90deg,#ececec 0%,#f2f2f2 45%,#d8d8d8 70%,#c4c4c4 88%,#e6e6e6 100%);"><div class="a" style="left:17px;top:0;width:20px;height:24px;background:#9cb8e6;clip-path:polygon(8% 0,92% 0,100% 100%,0 100%);"></div><div class="a" style="left:13px;top:0;width:4px;height:8px;background:#e0a888;opacity:0;"></div><div class="a" style="left:37px;top:0;width:4px;height:8px;background:#e0a888;opacity:0;"></div></div><div class="a" style="left:350px;top:0;width:50px;height:24px;background:linear-gradient(90deg,#ececec 0%,#f2f2f2 45%,#d8d8d8 70%,#c4c4c4 88%,#e6e6e6 100%);"><div class="a" style="left:17px;top:0;width:20px;height:24px;background:#9cb8e6;clip-path:polygon(8% 0,92% 0,100% 100%,0 100%);"></div><div class="a" style="left:13px;top:0;width:4px;height:8px;background:#e0a888;opacity:0;"></div><div class="a" style="left:37px;top:0;width:4px;height:8px;background:#e0a888;opacity:0;"></div></div><div class="a" style="left:400px;top:0;width:50px;height:24px;background:linear-gradient(90deg,#ececec 0%,#f2f2f2 45%,#d8d8d8 70%,#c4c4c4 88%,#e6e6e6 100%);"><div class="a" style="left:17px;top:0;width:20px;height:24px;background:#9cb8e6;clip-path:polygon(8% 0,92% 0,100% 100%,0 100%);"></div><div class="a" style="left:13px;top:0;width:4px;height:8px;background:#e0a888;opacity:0;"></div><div class="a" style="left:37px;top:0;width:4px;height:8px;background:#e0a888;opacity:0;"></div></div><div class="a" style="left:450px;top:0;width:50px;height:24px;background:linear-gradient(90deg,#ececec 0%,#f2f2f2 45%,#d8d8d8 70%,#c4c4c4 88%,#e6e6e6 100%);"><div class="a" style="left:17px;top:0;width:20px;height:24px;background:#9cb8e6;clip-path:polygon(8% 0,92% 0,100% 100%,0 100%);"></div><div class="a" style="left:13px;top:0;width:4px;height:8px;background:#e0a888;opacity:0;"></div><div class="a" style="left:37px;top:0;width:4px;height:8px;background:#e0a888;opacity:0;"></div></div><div class="a" style="left:500px;top:0;width:50px;height:24px;background:linear-gradient(90deg,#ececec 0%,#f2f2f2 45%,#d8d8d8 70%,#c4c4c4 88%,#e6e6e6 100%);"><div class="a" style="left:17px;top:0;width:20px;height:24px;background:#9cb8e6;clip-path:polygon(8% 0,92% 0,100% 100%,0 100%);"></div><div class="a" style="left:13px;top:0;width:4px;height:8px;background:#e0a888;opacity:0;"></div><div class="a" style="left:37px;top:0;width:4px;height:8px;background:#e0a888;opacity:0;"></div></div></div><div class="a" style="left:0;top:48.5px;width:503px;height:1px;background:#3a7a80;"></div></div><div class="a t" style="font-size:10.5px;line-height:10.5px;color:#d8d8d8;font-weight:400;top:686.41px;left:239px;">Applied</div><div class="a t" style="font-size:10.5px;line-height:10.5px;color:#d8d8d8;font-weight:400;top:686.41px;letter-spacing:-0.05px;left:282px;">Arms Out &amp; Point &amp; Twirl – Trumpet Pants</div><div class="a t" style="font-size:10.5px;line-height:10.5px;color:#d8d8d8;font-weight:400;top:686.41px;letter-spacing:-0.1px;left:484.5px;">00:00:07:05</div><div class="a" style="left:598px;top:572px;width:2px;height:407px;background:#9a9a9a;border-radius:0px;"></div><svg class="a" style="left:593px;top:558px;" width="12" height="15" viewBox="0 0 12 15" fill="none"><path d="M2 1.5h8v8a4 4 0 0 1-8 0z" stroke="#fff" stroke-width="2"/></svg><div class="a" style="left:135px;top:985px;width:1528px;height:6px;background:#424242;border-radius:3px;"></div><div class="a" style="left:1px;top:30px;width:599px;height:52px;border:4px solid #f54d47;border-radius:7px;box-shadow:inset 0 0 0 1px #121212;"></div><div class="a" style="left:1178px;top:28px;width:484px;height:47px;border:4px solid #f54d47;border-radius:7px;box-shadow:inset 0 0 0 1px #121212;"></div>
</body></html>
